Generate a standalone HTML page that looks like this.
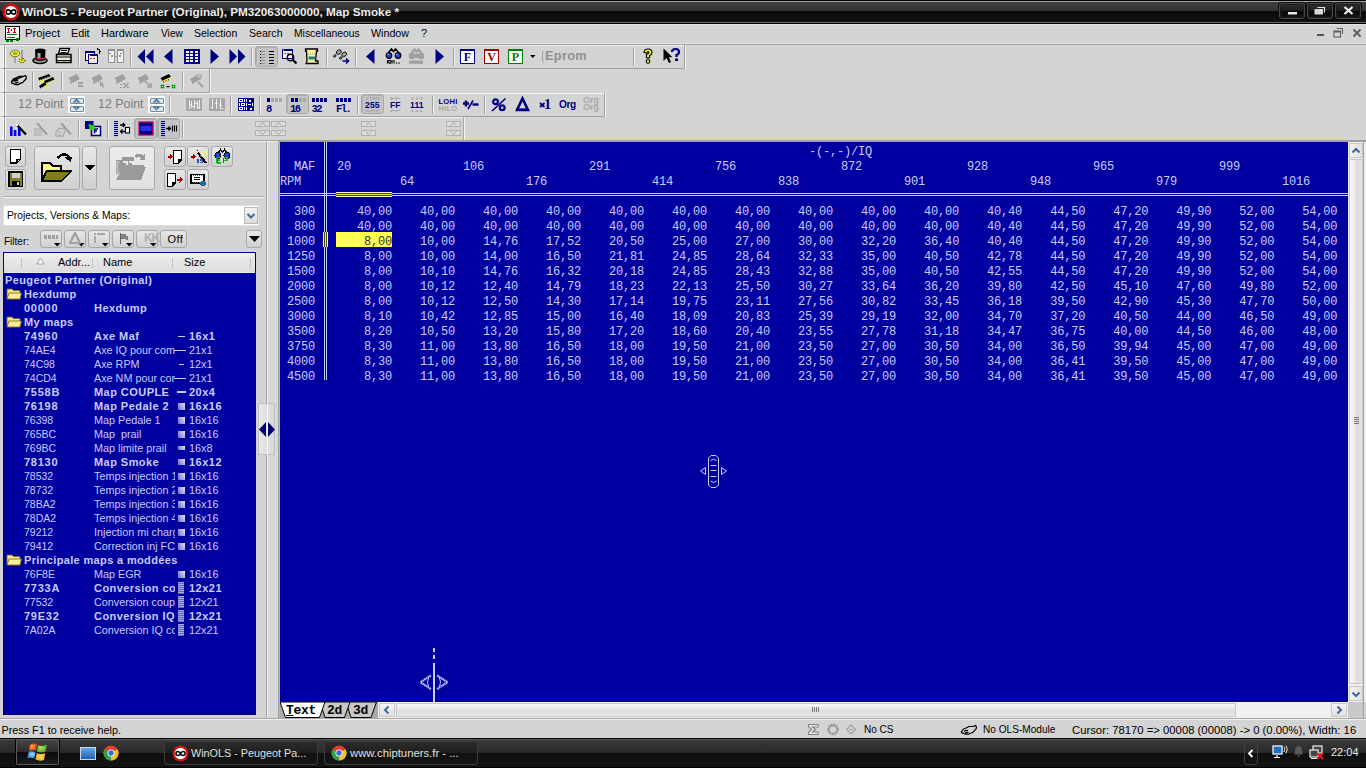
<!DOCTYPE html>
<html><head><meta charset="utf-8"><title>WinOLS</title>
<style>
html,body{margin:0;padding:0;width:1366px;height:768px;overflow:hidden;background:#d4d4d4}
body{position:relative;font-family:"Liberation Sans",sans-serif}
body div, body svg{position:absolute}
body div span, body div u{position:static}
</style></head><body>
<div style="left:0;top:0;width:1366px;height:24px;background:linear-gradient(#000 0,#000 1px,#a0a0a0 1px,#a0a0a0 2px,#404040 2px,#333 11px,#0b0b0b 11px,#121212 22px,#6e6e6e 22px,#6e6e6e 23px,#000 23px)"></div>
<svg style="left:2px;top:3px;shape-rendering:auto" width="18" height="18" viewBox="0 0 18 18" shape-rendering="crispEdges"><circle cx="9" cy="9" r="8.5" fill="#d01010"/><circle cx="9" cy="9" r="6" fill="#fff"/><path d="M9 9 C8 6.2 4.2 6.2 4.2 9 C4.2 11.8 8 11.8 9 9 C10 6.2 13.8 6.2 13.8 9 C13.8 11.8 10 11.8 9 9 Z" fill="none" stroke="#000" stroke-width="1.6"/></svg>
<div style="left:22px;top:5px;font-size:11.72px;font-weight:bold;color:#ececec;line-height:14px;letter-spacing:0px">WinOLS - Peugeot Partner (Original), PM32063000000, Map Smoke *</div>
<div style="left:1279px;top:3px;width:26px;height:16px;border:1px solid #4a4a4a;border-radius:3px;box-sizing:border-box;background:linear-gradient(#303030,#1c1c1c 50%,#080808 51%,#141414);box-shadow:inset 0 0 0 1px #1a1a1a, 0 0 0 1px #0a0a0a"></div>
<div style="left:1307px;top:3px;width:26px;height:16px;border:1px solid #4a4a4a;border-radius:3px;box-sizing:border-box;background:linear-gradient(#303030,#1c1c1c 50%,#080808 51%,#141414);box-shadow:inset 0 0 0 1px #1a1a1a, 0 0 0 1px #0a0a0a"></div>
<div style="left:1335px;top:3px;width:26px;height:16px;border:1px solid #4a4a4a;border-radius:3px;box-sizing:border-box;background:linear-gradient(#303030,#1c1c1c 50%,#080808 51%,#141414);box-shadow:inset 0 0 0 1px #1a1a1a, 0 0 0 1px #0a0a0a"></div>
<svg style="left:1288px;top:12px;shape-rendering:auto" width="9" height="3" viewBox="0 0 9 3" shape-rendering="crispEdges"><rect x="0" y="0" width="9" height="2.5" fill="#e8e8e8"/></svg>
<svg style="left:1314px;top:6px;shape-rendering:auto" width="12" height="9" viewBox="0 0 12 9" shape-rendering="crispEdges"><path d="M3.5 1.5 H10.5 V6.5" fill="none" stroke="#e0e0e0" stroke-width="1.2"/><rect x="0.5" y="3" width="8.5" height="5.5" fill="#d8d8d8"/></svg>
<svg style="left:1343px;top:6px;shape-rendering:auto" width="11" height="9" viewBox="0 0 11 9" shape-rendering="crispEdges"><path d="M1.5 1 L9.5 8 M9.5 1 L1.5 8" stroke="#f0f0f0" stroke-width="2.2"/></svg>
<div style="left:0px;top:24px;width:1366px;height:20px;background:#d4d4d4;border-top:1px solid #e4e4e4;box-sizing:border-box"></div>
<svg style="left:4px;top:25px;" width="17" height="17" viewBox="0 0 17 17" shape-rendering="crispEdges"><rect x="1" y="1" width="14" height="13" fill="#fff" stroke="#000"/><path d="M3 3h3M4 3v4M3 7h3M9 3h3M10 3v4M9 7h3" stroke="#c00000"/><rect x="7" y="4" width="1" height="2" fill="#c00000"/><path d="M3 9h10M3 12h8" stroke="#007000"/><rect x="2" y="15" width="3" height="2" fill="#008000"/><rect x="6" y="15" width="3" height="2" fill="#008000"/><rect x="12" y="13" width="3" height="3" fill="#008000"/></svg>
<div style="left:24.9px;top:27px;font-size:11.5px;color:#000;line-height:12px;transform:scaleX(0.98);transform-origin:0 0">Project</div>
<div style="left:71.2px;top:27px;font-size:11.5px;color:#000;line-height:12px;transform:scaleX(0.94);transform-origin:0 0">Edit</div>
<div style="left:101.0px;top:27px;font-size:11.5px;color:#000;line-height:12px;transform:scaleX(0.955);transform-origin:0 0">Hardware</div>
<div style="left:160.5px;top:27px;font-size:11.5px;color:#000;line-height:12px;transform:scaleX(0.886);transform-origin:0 0">View</div>
<div style="left:194.3px;top:27px;font-size:11.5px;color:#000;line-height:12px;transform:scaleX(0.914);transform-origin:0 0">Selection</div>
<div style="left:249.0px;top:27px;font-size:11.5px;color:#000;line-height:12px;transform:scaleX(0.92);transform-origin:0 0">Search</div>
<div style="left:293.7px;top:27px;font-size:11.5px;color:#000;line-height:12px;transform:scaleX(0.9);transform-origin:0 0">Miscellaneous</div>
<div style="left:371.4px;top:27px;font-size:11.5px;color:#000;line-height:12px;transform:scaleX(0.93);transform-origin:0 0">Window</div>
<div style="left:420.7px;top:27px;font-size:11.5px;color:#000;line-height:12px;transform:scaleX(0.95);transform-origin:0 0">?</div>
<svg style="left:1316px;top:30px;" width="10" height="8" viewBox="0 0 10 8" shape-rendering="crispEdges"><rect x="1" y="4" width="7" height="2" fill="#555"/></svg>
<svg style="left:1333px;top:28px;shape-rendering:auto" width="11" height="10" viewBox="0 0 11 10" shape-rendering="crispEdges"><path d="M3.5 0.5 H9.5 V6" fill="none" stroke="#606060" stroke-width="1.1"/><rect x="1" y="3" width="6.5" height="6" fill="none" stroke="#606060" stroke-width="1.1"/><rect x="1" y="3" width="6.5" height="1.5" fill="#606060"/></svg>
<svg style="left:1352px;top:28px;shape-rendering:auto" width="10" height="10" viewBox="0 0 10 10" shape-rendering="crispEdges"><path d="M1.5 1.5 L8.5 8.5 M8.5 1.5 L1.5 8.5" stroke="#606060" stroke-width="2"/></svg>
<div style="left:0;top:43px;width:1366px;height:97px;background:#d4d4d4"></div>
<div style="left:0px;top:43px;width:1366px;height:1px;background:#e6e6e6"></div>
<div style="left:0px;top:44px;width:1366px;height:1px;background:#a0a0a0"></div>
<div style="left:2px;top:45px;width:682px;height:1px;background:#f4f4f4"></div>
<div style="left:2px;top:68px;width:683px;height:1px;background:#a0a0a0"></div>
<div style="left:684px;top:45px;width:1px;height:23px;background:#a0a0a0"></div>
<div style="left:685px;top:45px;width:1px;height:24px;background:#f4f4f4"></div>
<div style="left:0px;top:45px;width:3px;height:23px;background:#ececec"></div>
<div style="left:3px;top:45px;width:1px;height:23px;background:#ffffff"></div>
<div style="left:4px;top:45px;width:1px;height:23px;background:#909090"></div>
<div style="left:5px;top:45px;width:1px;height:23px;background:#ffffff"></div>
<div style="left:2px;top:69px;width:207px;height:1px;background:#f4f4f4"></div>
<div style="left:2px;top:92px;width:208px;height:1px;background:#a0a0a0"></div>
<div style="left:209px;top:69px;width:1px;height:23px;background:#a0a0a0"></div>
<div style="left:210px;top:69px;width:1px;height:24px;background:#f4f4f4"></div>
<div style="left:0px;top:69px;width:3px;height:23px;background:#ececec"></div>
<div style="left:3px;top:69px;width:1px;height:23px;background:#ffffff"></div>
<div style="left:4px;top:69px;width:1px;height:23px;background:#909090"></div>
<div style="left:5px;top:69px;width:1px;height:23px;background:#ffffff"></div>
<div style="left:2px;top:93px;width:602px;height:1px;background:#f4f4f4"></div>
<div style="left:2px;top:116px;width:603px;height:1px;background:#a0a0a0"></div>
<div style="left:604px;top:93px;width:1px;height:23px;background:#a0a0a0"></div>
<div style="left:605px;top:93px;width:1px;height:24px;background:#f4f4f4"></div>
<div style="left:0px;top:93px;width:3px;height:23px;background:#ececec"></div>
<div style="left:3px;top:93px;width:1px;height:23px;background:#ffffff"></div>
<div style="left:4px;top:93px;width:1px;height:23px;background:#909090"></div>
<div style="left:5px;top:93px;width:1px;height:23px;background:#ffffff"></div>
<div style="left:2px;top:117px;width:461px;height:1px;background:#f4f4f4"></div>
<div style="left:2px;top:140px;width:462px;height:1px;background:#a0a0a0"></div>
<div style="left:463px;top:117px;width:1px;height:23px;background:#a0a0a0"></div>
<div style="left:464px;top:117px;width:1px;height:24px;background:#f4f4f4"></div>
<div style="left:0px;top:117px;width:3px;height:23px;background:#ececec"></div>
<div style="left:3px;top:117px;width:1px;height:23px;background:#ffffff"></div>
<div style="left:4px;top:117px;width:1px;height:23px;background:#909090"></div>
<div style="left:5px;top:117px;width:1px;height:23px;background:#ffffff"></div>
<svg style="left:8px;top:46px" width="20" height="20" viewBox="0 0 20 20" shape-rendering="auto"><rect x="6" y="3" width="2" height="14" fill="#a8a8a8"/><rect x="13" y="4" width="2" height="13" fill="#a0a0a0"/><ellipse cx="7" cy="7.5" rx="4.6" ry="3.2" fill="#f0f020" stroke="#000" stroke-width="1" stroke-dasharray="1 1.2"/><ellipse cx="7" cy="7.5" rx="2.6" ry="1.3" fill="#a0a000"/><rect x="6" y="3" width="2" height="4" fill="#b0b0a0"/><ellipse cx="14" cy="14.5" rx="3" ry="2.2" fill="#f0f020" stroke="#000" stroke-width="1" stroke-dasharray="1 1.2"/><rect x="13" y="12" width="2" height="3" fill="#a0a000"/></svg>
<svg style="left:32px;top:47px" width="18" height="18" viewBox="0 0 18 18" shape-rendering="auto"><ellipse cx="8" cy="13.5" rx="7" ry="3" fill="#a0a0a0" stroke="#000" stroke-width="1.6"/><path d="M3 2.5 Q8 0.5 13.5 2.5 L13 13 Q8 15 3.5 13 Z" fill="#000"/><rect x="5.5" y="6" width="3" height="6" fill="#a8a8a8"/><path d="M4 11 Q8 13 13 11" stroke="#d02040" stroke-width="1.5" fill="none"/></svg>
<svg style="left:55px;top:47px" width="18" height="18" viewBox="0 0 18 18" shape-rendering="auto"><path d="M5 1.5 H14.5 L12.5 7 H3.5 Z" fill="#fff" stroke="#000" stroke-width="1.4"/><path d="M6 3.5 H12 M5.5 5.5 H11.5" stroke="#000"/><path d="M1.5 7.5 H16 V15.5 H1.5 Z" fill="#e8e8e8" stroke="#000" stroke-width="1.5"/><rect x="2.5" y="11" width="12" height="1.5" fill="#e0f0c0"/><path d="M1.5 10 H16 M1.5 13.5 H16" stroke="#000" stroke-width="1.2"/></svg>
<svg style="left:82px;top:46px" width="20" height="20" viewBox="0 0 20 20" shape-rendering="crispEdges"><rect x="3.5" y="5.5" width="9" height="9" fill="#f0f0ff" stroke="#000080"/><rect x="3" y="5" width="10" height="2" fill="#000080"/><rect x="6.5" y="8.5" width="9" height="9" fill="#ffe8f0" stroke="#000080"/><rect x="6" y="8" width="10" height="2" fill="#000080"/><rect x="7" y="9" width="1" height="1" fill="#fff"/><rect x="8" y="12" width="2" height="1" fill="#a03030"/><rect x="11" y="12" width="2" height="1" fill="#a03030"/><rect x="7" y="15" width="8" height="2" fill="#e8f0ff"/><path d="M15 3.5 Q18.5 3.5 18 6 Q17.5 7.5 16.5 7.5" stroke="#000" stroke-width="1.3" fill="none"/><path d="M14 3 L16.5 2 L16 5 Z" fill="#000"/></svg>
<svg style="left:106px;top:46px" width="20" height="20" viewBox="0 0 20 20" shape-rendering="crispEdges"><rect x="2.5" y="3.5" width="6" height="13" fill="#f0f0f0" stroke="#909090"/><rect x="2" y="3" width="7" height="2" fill="#909090"/><rect x="11.5" y="3.5" width="6" height="13" fill="#f0f0f0" stroke="#909090"/><rect x="11" y="3" width="7" height="2" fill="#909090"/><rect x="3" y="7" width="2" height="1" fill="#808080"/><rect x="5" y="9" width="2" height="2" fill="#909090"/><rect x="14" y="7" width="2" height="1" fill="#808080"/><rect x="13" y="9" width="2" height="2" fill="#909090"/><rect x="9" y="10" width="2" height="1" fill="#a0a0a0"/></svg>
<svg style="left:137px;top:48px" width="17" height="17" viewBox="0 0 17 17" shape-rendering="auto"><path d="M8 1 L0.5 8.5 L8 16 Z M16.5 1 L9 8.5 L16.5 16 Z" fill="#000080"/></svg>
<svg style="left:163px;top:48px" width="10" height="17" viewBox="0 0 10 17" shape-rendering="auto"><path d="M9.5 1 L1 8.5 L9.5 16 Z" fill="#000080"/></svg>
<svg style="left:184px;top:48px" width="16" height="16" viewBox="0 0 16 16" shape-rendering="crispEdges"><rect x="0" y="1" width="16" height="15" fill="#000080"/><rect x="2" y="3" width="3" height="2" fill="#fff"/><rect x="2" y="6" width="3" height="2" fill="#fff"/><rect x="2" y="9" width="3" height="2" fill="#fff"/><rect x="2" y="12" width="3" height="2" fill="#fff"/><rect x="6" y="3" width="3" height="2" fill="#fff"/><rect x="6" y="6" width="3" height="2" fill="#fff"/><rect x="6" y="9" width="3" height="2" fill="#fff"/><rect x="6" y="12" width="3" height="2" fill="#fff"/><rect x="11" y="3" width="3" height="2" fill="#fff"/><rect x="11" y="6" width="3" height="2" fill="#fff"/><rect x="11" y="9" width="3" height="2" fill="#fff"/><rect x="11" y="12" width="3" height="2" fill="#fff"/></svg>
<svg style="left:210px;top:48px" width="10" height="17" viewBox="0 0 10 17" shape-rendering="auto"><path d="M0.5 1 L9 8.5 L0.5 16 Z" fill="#000080"/></svg>
<svg style="left:229px;top:48px" width="17" height="17" viewBox="0 0 17 17" shape-rendering="auto"><path d="M0.5 1 L8 8.5 L0.5 16 Z M9 1 L16.5 8.5 L9 16 Z" fill="#000080"/></svg>
<div style="left:255px;top:46px;width:23px;height:21px;background:#c4c4c4;border:1px solid #a8a8a8;border-radius:3px;box-sizing:border-box;box-shadow:inset 1px 1px 0 #b0b0b0"></div>
<svg style="left:255px;top:46px" width="23" height="21" viewBox="0 0 23 21" shape-rendering="crispEdges"><rect x="5" y="5" width="1" height="1" fill="#000"/><rect x="7" y="5" width="3" height="1" fill="#909090"/><rect x="14" y="5" width="5" height="1.3" fill="#000"/><rect x="5" y="8" width="1" height="1" fill="#000"/><rect x="7" y="8" width="3" height="1" fill="#909090"/><rect x="14" y="8" width="5" height="1.3" fill="#000"/><rect x="5" y="11" width="1" height="1" fill="#000"/><rect x="7" y="11" width="3" height="1" fill="#909090"/><rect x="14" y="11" width="5" height="1.3" fill="#000"/><rect x="5" y="14" width="1" height="1" fill="#000"/><rect x="7" y="14" width="3" height="1" fill="#909090"/><rect x="14" y="14" width="5" height="1.3" fill="#000"/><rect x="5" y="17" width="1" height="1" fill="#000"/><rect x="7" y="17" width="3" height="1" fill="#909090"/><rect x="14" y="17" width="5" height="1.3" fill="#000"/><rect x="5.5" y="5" width="1" height="13" fill="#a0a0a0" opacity="0.6"/></svg>
<svg style="left:281px;top:47px" width="18" height="18" viewBox="0 0 18 18" shape-rendering="auto"><rect x="1.5" y="2.5" width="10" height="9" fill="#f8f8ff" stroke="#000080"/><rect x="1" y="2" width="11" height="2" fill="#000080"/><rect x="2" y="2.5" width="1" height="1" fill="#fff"/><rect x="3" y="6" width="2" height="1" fill="#c03030"/><rect x="6" y="6" width="2" height="1" fill="#c03030"/><circle cx="9.5" cy="10.5" r="3.2" fill="none" stroke="#000" stroke-width="1.4"/><path d="M12 13 L15.5 16.5" stroke="#000" stroke-width="2.2"/></svg>
<svg style="left:303px;top:47px" width="17" height="18" viewBox="0 0 17 18" shape-rendering="auto"><path d="M2.5 2 H14.5 V4 H13.5 L12.5 14 H15 V16.5 H3 L4 14 L3.5 4 H2.5 Z" fill="#f8f0a0" stroke="#000" stroke-width="1.3"/><rect x="5.5" y="9.5" width="7" height="3" fill="#208080"/><path d="M5 7 H12" stroke="#a0a060" stroke-dasharray="1 1"/></svg>
<svg style="left:332px;top:47px" width="18" height="18" viewBox="0 0 18 18" shape-rendering="auto"><ellipse cx="6.8" cy="5" rx="2.6" ry="2" transform="rotate(-35 6.8 5)" fill="#a8a8a8" stroke="#000" stroke-width="0.9"/><ellipse cx="12.2" cy="7.3" rx="2.6" ry="2" transform="rotate(-35 12.2 7.3)" fill="#a8a8a8" stroke="#000" stroke-width="0.9"/><ellipse cx="2.8" cy="9" rx="1.4" ry="1" transform="rotate(-35 2.8 9)" fill="#a8a8a8" stroke="#000" stroke-width="0.9"/><ellipse cx="8.8" cy="11" rx="1.4" ry="1" transform="rotate(-35 8.8 11)" fill="#a8a8a8" stroke="#000" stroke-width="0.9"/><path d="M10.5 14 H16.5 M14 11.5 L16.5 14 L14 16.5" stroke="#000080" stroke-width="1.6" fill="none"/></svg>
<svg style="left:365px;top:48px" width="10" height="17" viewBox="0 0 10 17" shape-rendering="auto"><path d="M9.5 1 L1 8.5 L9.5 16 Z" fill="#000080"/></svg>
<svg style="left:385px;top:47px" width="17" height="18" viewBox="0 0 17 18" shape-rendering="auto"><path d="M3 6 L6.5 2 L8.5 4.5 L10.5 2 L14 6" fill="none" stroke="#000" stroke-width="1.6"/><circle cx="4" cy="8.5" r="2.8" fill="#2040e0" stroke="#000" stroke-width="1.2"/><circle cx="13" cy="8.5" r="2.8" fill="#2040e0" stroke="#000" stroke-width="1.2"/><circle cx="3" cy="7.5" r="0.8" fill="#80c0ff"/><circle cx="12" cy="7.5" r="0.8" fill="#80c0ff"/><path d="M2.5 13 V16.5 M7 13 V16.5 M9 13 V16.5" stroke="#000" stroke-width="1.1"/><ellipse cx="4.8" cy="14.8" rx="1.2" ry="1.6" fill="none" stroke="#000" stroke-width="1.1"/><rect x="11" y="15.5" width="1.2" height="1.2" fill="#000"/><rect x="13.5" y="15.5" width="1.2" height="1.2" fill="#000"/></svg>
<svg style="left:408px;top:47px" width="17" height="18" viewBox="0 0 17 18" shape-rendering="auto"><path d="M3 7 L6.5 2.5 L8.5 5 L10.5 2.5 L14 7" fill="none" stroke="#a0a0a0" stroke-width="2.2"/><circle cx="4" cy="9" r="3.3" fill="#a0a0a0"/><circle cx="13" cy="9" r="3.3" fill="#a0a0a0"/><rect x="7" y="7" width="3" height="4" fill="#a0a0a0"/><rect x="1" y="13.5" width="14" height="3.3" fill="#a0a0a0"/></svg>
<svg style="left:435px;top:48px" width="10" height="17" viewBox="0 0 10 17" shape-rendering="auto"><path d="M0.5 1 L9 8.5 L0.5 16 Z" fill="#000080"/></svg>
<svg style="left:460px;top:49px" width="15" height="15" viewBox="0 0 15 15" shape-rendering="crispEdges"><rect x="0.5" y="0.5" width="14" height="13.5" fill="#fff" stroke="#000080"/><rect x="0" y="0" width="15" height="2" fill="#000080"/></svg>
<div style="left:460px;top:51px;width:15px;text-align:center;font-family:'Liberation Serif',serif;font-weight:bold;font-size:12px;line-height:12px;color:#000080">F</div>
<svg style="left:484px;top:49px" width="15" height="15" viewBox="0 0 15 15" shape-rendering="crispEdges"><rect x="0.5" y="0.5" width="14" height="13.5" fill="#fff" stroke="#a00000"/><rect x="0" y="0" width="15" height="2" fill="#a00000"/></svg>
<div style="left:484px;top:51px;width:15px;text-align:center;font-family:'Liberation Serif',serif;font-weight:bold;font-size:12px;line-height:12px;color:#a00000">V</div>
<svg style="left:508px;top:49px" width="15" height="15" viewBox="0 0 15 15" shape-rendering="crispEdges"><rect x="0.5" y="0.5" width="14" height="13.5" fill="#fff" stroke="#008000"/><rect x="0" y="0" width="15" height="2" fill="#008000"/></svg>
<div style="left:508px;top:51px;width:15px;text-align:center;font-family:'Liberation Serif',serif;font-weight:bold;font-size:12px;line-height:12px;color:#008000">P</div>
<svg style="left:530px;top:55px" width="6" height="4" viewBox="0 0 6 4" shape-rendering="auto"><path d="M0 0 H5.5 L2.75 3 Z" fill="#000"/></svg>
<div style="left:545px;top:49px;font-size:12.8px;font-weight:bold;line-height:14px;color:#909090;letter-spacing:0.3px">Eprom</div>
<svg style="left:541px;top:50px" width="4" height="14" viewBox="0 0 4 14" shape-rendering="crispEdges"><path d="M3 1 L1.5 2.5 V11.5 L3 13" stroke="#a0a0a0" fill="none"/></svg>
<svg style="left:641px;top:47px" width="14" height="18" viewBox="0 0 14 18" shape-rendering="auto"><path d="M3 5.5 Q3 2 7 2 Q11 2 11 5.5 Q11 7.5 8.5 8.5 V11 H5.5 V7.5 Q8 7 8 5.5 Q8 4.5 7 4.5 Q6 4.5 6 6 Z" fill="#f8f040" stroke="#000" stroke-width="1.1"/><circle cx="7" cy="14.5" r="1.8" fill="#f8f040" stroke="#000" stroke-width="1.1"/></svg>
<svg style="left:662px;top:47px" width="19" height="18" viewBox="0 0 19 18" shape-rendering="auto"><path d="M1.5 1.5 V14 L4.5 11 L7 16 L9 15 L6.8 10.2 H10.5 Z" fill="#000"/><path d="M10 5 Q10 2 13.5 2 Q17 2 17 5 Q17 7 14.5 8 V10" fill="none" stroke="#000080" stroke-width="2.2"/><rect x="13" y="11.5" width="3" height="2.5" fill="#000080"/></svg>
<svg style="left:10px;top:74px" width="18" height="12" viewBox="0 0 18 12" shape-rendering="auto"><path d="M1.5 7.5 Q3 4.5 6 4 L9 2.5 H13 L15.5 1.5 M15.5 1.5 Q17 3 16 5 L14 7 Q13 9 11 9 L8.5 10.5 H6 Q4 10.5 3.5 9.5 Q1 9.5 1.5 7.5 Z M4 7.5 Q6 6 8 6.5 M5 9 Q7 8 8.5 8.5" fill="none" stroke="#000" stroke-width="1.3"/></svg>
<svg style="left:38px;top:72px" width="18" height="18" viewBox="0 0 18 18" shape-rendering="auto"><path d="M0 6 L11 2 L12.5 4.5 L1.5 8.5 Z" fill="#000"/><rect x="2.0" y="7.5" width="1" height="2" fill="#e8e830"/><rect x="4.5" y="6.6" width="1" height="2" fill="#e8e830"/><rect x="7.0" y="5.7" width="1" height="2" fill="#e8e830"/><rect x="9.5" y="4.8" width="1" height="2" fill="#e8e830"/><path d="M6 9 L15 5 L16.5 7.5 L7.5 11.5 Z" fill="#000"/><rect x="8.0" y="10.5" width="1" height="2" fill="#e8e830"/><rect x="10.5" y="9.6" width="1" height="2" fill="#e8e830"/><rect x="13.0" y="8.7" width="1" height="2" fill="#e8e830"/><rect x="15.5" y="7.8" width="1" height="2" fill="#e8e830"/><path d="M1 14 L7 10 L8.5 12.5 L2.5 16.5 Z" fill="#000"/><rect x="3.0" y="15.5" width="1" height="2" fill="#e8e830"/><rect x="5.5" y="14.6" width="1" height="2" fill="#e8e830"/><rect x="8.0" y="13.7" width="1" height="2" fill="#e8e830"/><rect x="10.5" y="12.8" width="1" height="2" fill="#e8e830"/><rect x="3" y="8" width="3" height="3" fill="#e8e830" opacity="0.8"/></svg>
<svg style="left:68px;top:73px" width="17" height="15" viewBox="0 0 17 15" shape-rendering="auto"><path d="M0.5 5 L9 1 L12 6 L3.5 10 Z" fill="#a0a0a0"/><rect x="2" y="9" width="1.2" height="2" fill="#a0a0a0"/><rect x="4.5" y="8" width="1.2" height="2" fill="#a0a0a0"/><rect x="7" y="7" width="1.2" height="2" fill="#a0a0a0"/><rect x="10" y="9" width="5" height="2" fill="#a0a0a0"/><rect x="10" y="12" width="5" height="2" fill="#a0a0a0"/></svg>
<svg style="left:91px;top:73px" width="17" height="15" viewBox="0 0 17 15" shape-rendering="auto"><path d="M0.5 5 L9 1 L12 6 L3.5 10 Z" fill="#a0a0a0"/><rect x="2" y="9" width="1.2" height="2" fill="#a0a0a0"/><rect x="4.5" y="8" width="1.2" height="2" fill="#a0a0a0"/><rect x="7" y="7" width="1.2" height="2" fill="#a0a0a0"/><path d="M9 8 V14 L10.5 12.5 L12.5 15 L13.5 14 L11.5 11.5 H13.5 Z" fill="#a0a0a0"/></svg>
<svg style="left:114px;top:73px" width="17" height="16" viewBox="0 0 17 16" shape-rendering="auto"><path d="M0.5 5 L9 1 L12 6 L3.5 10 Z" fill="#a0a0a0"/><rect x="2" y="9" width="1.2" height="2" fill="#a0a0a0"/><rect x="4.5" y="8" width="1.2" height="2" fill="#a0a0a0"/><rect x="7" y="7" width="1.2" height="2" fill="#a0a0a0"/><path d="M9.5 10 L14.5 15 M14.5 10 L9.5 15" stroke="#a0a0a0" stroke-width="1.6"/><rect x="6" y="11" width="2" height="1" fill="#a0a0a0"/><rect x="6" y="14" width="2" height="1" fill="#a0a0a0"/></svg>
<svg style="left:137px;top:73px" width="17" height="15" viewBox="0 0 17 15" shape-rendering="auto"><path d="M0.5 5 L9 1 L12 6 L3.5 10 Z" fill="#a0a0a0"/><rect x="2" y="9" width="1.2" height="2" fill="#a0a0a0"/><rect x="4.5" y="8" width="1.2" height="2" fill="#a0a0a0"/><rect x="7" y="7" width="1.2" height="2" fill="#a0a0a0"/><path d="M8 8 L14 14 M14 10 V14 H10" stroke="#a0a0a0" stroke-width="1.7" fill="none"/></svg>
<svg style="left:160px;top:73px" width="18" height="17" viewBox="0 0 18 17" shape-rendering="auto"><path d="M0.5 5 L9 1 L11 4 L2.5 8 Z" fill="#000"/><path d="M2 8 L10.5 4 L11 6.5 L3 9.5 Z" fill="#e8e060"/><rect x="3" y="8" width="1" height="1.5" fill="#606000"/><rect x="5.5" y="7" width="1" height="1.5" fill="#606000"/><rect x="8" y="6" width="1" height="1.5" fill="#606000"/><path d="M1.5 11.5 V15.5 M3.5 11.5 V15.5 M0.5 12.5 H4.5 M0.5 14.5 H4.5 M12.5 11.5 V15.5 M14.5 11.5 V15.5 M11.5 12.5 H15.5 M11.5 14.5 H15.5" stroke="#10a010" stroke-width="1.1"/><rect x="6.5" y="13" width="3" height="1.2" fill="#000"/></svg>
<svg style="left:189px;top:73px" width="17" height="15" viewBox="0 0 17 15" shape-rendering="auto"><path d="M1 6 L9 1.5 L12 6 L4 10.5 Z" fill="#a0a0a0"/><rect x="8" y="2" width="4" height="3" fill="#c8c8c8" stroke="#a0a0a0"/><path d="M9 9 L14 14" stroke="#a0a0a0" stroke-width="2"/><rect x="3" y="9" width="1.2" height="2" fill="#a0a0a0"/></svg>
<div style="left:18px;top:97px;font-size:12.4px;line-height:14px;color:#7c7c7c;letter-spacing:0px">12 Point</div>
<div style="left:98px;top:97px;font-size:12.4px;line-height:14px;color:#7c7c7c;letter-spacing:0px">12 Point</div>
<div style="left:68px;top:96px;width:17px;height:17px;background:#fff"></div>
<div style="left:69.5px;top:97.5px;width:14px;height:6px;border:1px solid #808890;border-radius:1px;box-sizing:border-box;background:#d8e8f4"></div>
<div style="left:69.5px;top:106px;width:14px;height:6px;border:1px solid #808890;border-radius:1px;box-sizing:border-box;background:#d8e8f4"></div>
<svg style="left:72px;top:98px" width="9" height="5" viewBox="0 0 9 5" shape-rendering="auto"><path d="M0.5 4.5 L4.5 0.5 L8.5 4.5 Z" fill="#4a7090"/><rect x="4" y="3" width="1" height="1" fill="#fff"/></svg>
<svg style="left:72px;top:106px" width="9" height="5" viewBox="0 0 9 5" shape-rendering="auto"><path d="M0.5 0.5 L4.5 4.5 L8.5 0.5 Z" fill="#4a7090"/><rect x="4" y="1.5" width="1" height="1" fill="#fff"/></svg>
<div style="left:148px;top:96px;width:17px;height:17px;background:#fff"></div>
<div style="left:149.5px;top:97.5px;width:14px;height:6px;border:1px solid #808890;border-radius:1px;box-sizing:border-box;background:#d8e8f4"></div>
<div style="left:149.5px;top:106px;width:14px;height:6px;border:1px solid #808890;border-radius:1px;box-sizing:border-box;background:#d8e8f4"></div>
<svg style="left:152px;top:98px" width="9" height="5" viewBox="0 0 9 5" shape-rendering="auto"><path d="M0.5 4.5 L4.5 0.5 L8.5 4.5 Z" fill="#4a7090"/><rect x="4" y="3" width="1" height="1" fill="#fff"/></svg>
<svg style="left:152px;top:106px" width="9" height="5" viewBox="0 0 9 5" shape-rendering="auto"><path d="M0.5 0.5 L4.5 4.5 L8.5 0.5 Z" fill="#4a7090"/><rect x="4" y="1.5" width="1" height="1" fill="#fff"/></svg>
<svg style="left:186px;top:98px" width="16" height="14" viewBox="0 0 16 14" shape-rendering="crispEdges"><rect x="0" y="0" width="16" height="13" fill="#a8a8a8"/><path d="M3 2v9M5 3v7M8 2v9M11 3v8M13 2v9M3 6h2M8 5h3M5 8h3M11 9h2" stroke="#f0f0f0" stroke-width="1"/></svg>
<svg style="left:209px;top:98px" width="16" height="14" viewBox="0 0 16 14" shape-rendering="crispEdges"><rect x="0" y="0" width="16" height="13" fill="#a8a8a8"/><path d="M3.5 1v10M7.5 1v10M11.5 1v10M2 9h2M6 5h3M10 7h3M12 10h2" stroke="#f0f0f0" stroke-width="1"/></svg>
<svg style="left:238px;top:98px" width="16" height="14" viewBox="0 0 16 14" shape-rendering="crispEdges"><rect x="0" y="0" width="16" height="13" fill="#000080"/><rect x="1.5" y="1.5" width="3" height="2" fill="none" stroke="#fff" stroke-width="1"/><rect x="6" y="1" width="1" height="3" fill="#fff"/><rect x="8" y="1" width="1" height="3" fill="#fff"/><rect x="11" y="1.5" width="2" height="2" fill="#fff"/><rect x="1" y="5" width="1" height="3" fill="#fff"/><rect x="3.5" y="5.5" width="3" height="2" fill="none" stroke="#fff" stroke-width="1"/><rect x="8" y="5" width="1" height="3" fill="#fff"/><rect x="10" y="6" width="3" height="1" fill="#fff"/><rect x="14" y="5" width="1" height="3" fill="#fff"/><rect x="1.5" y="9.5" width="3" height="2" fill="none" stroke="#fff" stroke-width="1"/><rect x="6" y="9" width="1" height="3" fill="#fff"/><rect x="8" y="9" width="1" height="3" fill="#fff"/><rect x="12" y="9.5" width="2" height="2" fill="#fff"/></svg>
<svg style="left:267px;top:98px" width="16" height="5" viewBox="0 0 16 5" shape-rendering="crispEdges"><rect x="0" y="0" width="3" height="4" fill="#000080"/><rect x="4" y="0" width="3" height="4" fill="#a8a8a8"/><rect x="8" y="0" width="3" height="4" fill="#a8a8a8"/><rect x="12" y="0" width="3" height="4" fill="#a8a8a8"/></svg>
<div style="left:266px;top:103.5px;font-family:'Liberation Mono',monospace;font-weight:bold;font-size:10.5px;line-height:10px;color:#000080;letter-spacing:-1.6px">8</div>
<div style="left:286px;top:94px;width:23px;height:20px;background:#c4c4c4;border:1px solid #a8a8a8;border-radius:3px;box-sizing:border-box;box-shadow:inset 1px 1px 0 #b0b0b0"></div>
<svg style="left:291px;top:98px" width="16" height="5" viewBox="0 0 16 5" shape-rendering="crispEdges"><rect x="0" y="0" width="3" height="4" fill="#000080"/><rect x="4" y="0" width="3" height="4" fill="#000080"/><rect x="8" y="0" width="3" height="4" fill="#a8a8a8"/><rect x="12" y="0" width="3" height="4" fill="#a8a8a8"/></svg>
<div style="left:290px;top:103.5px;font-family:'Liberation Mono',monospace;font-weight:bold;font-size:10.5px;line-height:10px;color:#000080;letter-spacing:-1.6px">16</div>
<svg style="left:312px;top:98px" width="16" height="5" viewBox="0 0 16 5" shape-rendering="crispEdges"><rect x="0" y="0" width="3" height="4" fill="#000080"/><rect x="4" y="0" width="3" height="4" fill="#000080"/><rect x="8" y="0" width="3" height="4" fill="#000080"/><rect x="12" y="0" width="3" height="4" fill="#000080"/></svg>
<div style="left:311.5px;top:103.5px;font-family:'Liberation Mono',monospace;font-weight:bold;font-size:10.5px;line-height:10px;color:#000080;letter-spacing:-1.6px">32</div>
<svg style="left:336px;top:98px" width="16" height="5" viewBox="0 0 16 5" shape-rendering="crispEdges"><rect x="0" y="0" width="3" height="4" fill="#000080"/><rect x="4" y="0" width="3" height="4" fill="#000080"/><rect x="8" y="0" width="3" height="4" fill="#000080"/><rect x="12" y="0" width="3" height="4" fill="#000080"/></svg>
<div style="left:336px;top:103.5px;font-family:'Liberation Mono',monospace;font-weight:bold;font-size:10.5px;line-height:10px;color:#000080;letter-spacing:-1.6px">Fl.</div>
<div style="left:361px;top:94px;width:23px;height:20px;background:#c4c4c4;border:1px solid #a8a8a8;border-radius:3px;box-sizing:border-box;box-shadow:inset 1px 1px 0 #b0b0b0"></div>
<div style="left:365px;top:100px;font-family:'Liberation Sans',sans-serif;font-weight:bold;font-size:8.6px;line-height:10px;letter-spacing:0.1px;color:#000080">255</div>
<div style="left:365px;top:96.5px;height:3px;width:16px;overflow:hidden"><div style="position:relative;top:-4px;font-family:'Liberation Sans',sans-serif;font-weight:bold;font-size:8.6px;line-height:10px;letter-spacing:0.1px;color:#a8a8a8">255</div></div>
<div style="left:365px;top:109px;height:3px;width:16px;overflow:hidden"><div style="position:relative;top:-1.5px;font-family:'Liberation Sans',sans-serif;font-weight:bold;font-size:8.6px;line-height:10px;letter-spacing:0.1px;color:#a8a8a8">255</div></div>
<div style="left:390px;top:100px;font-family:'Liberation Sans',sans-serif;font-weight:bold;font-size:8.6px;line-height:10px;letter-spacing:0.1px;color:#000080">FF</div>
<div style="left:390px;top:96.5px;height:3px;width:12px;overflow:hidden"><div style="position:relative;top:-4px;font-family:'Liberation Sans',sans-serif;font-weight:bold;font-size:8.6px;line-height:10px;letter-spacing:0.1px;color:#a8a8a8">FF</div></div>
<div style="left:390px;top:109px;height:3px;width:12px;overflow:hidden"><div style="position:relative;top:-1.5px;font-family:'Liberation Sans',sans-serif;font-weight:bold;font-size:8.6px;line-height:10px;letter-spacing:0.1px;color:#a8a8a8">FF</div></div>
<div style="left:410px;top:100px;font-family:'Liberation Sans',sans-serif;font-weight:bold;font-size:8.6px;line-height:10px;letter-spacing:0.1px;color:#000080">111</div>
<div style="left:410px;top:96.5px;height:3px;width:16px;overflow:hidden"><div style="position:relative;top:-4px;font-family:'Liberation Sans',sans-serif;font-weight:bold;font-size:8.6px;line-height:10px;letter-spacing:0.1px;color:#a8a8a8">111</div></div>
<div style="left:410px;top:109px;height:3px;width:16px;overflow:hidden"><div style="position:relative;top:-1.5px;font-family:'Liberation Sans',sans-serif;font-weight:bold;font-size:8.6px;line-height:10px;letter-spacing:0.1px;color:#a8a8a8">111</div></div>
<div style="left:438.5px;top:97.5px;font-size:7.6px;font-weight:bold;line-height:8px;color:#000080;letter-spacing:0.2px">LOHI</div>
<div style="left:438.5px;top:104.5px;font-size:7.6px;font-weight:bold;line-height:8px;color:#a8a8a8;letter-spacing:0.2px">HILO</div>
<svg style="left:462px;top:99px" width="17" height="11" viewBox="0 0 17 11" shape-rendering="auto"><path d="M1 4.5 H7 M4 1.5 V7.5" stroke="#000080" stroke-width="2.4"/><path d="M6 10 L11 1.5" stroke="#000080" stroke-width="1.6"/><path d="M10.5 5.5 H16.5" stroke="#000080" stroke-width="2.4"/></svg>
<svg style="left:491px;top:97px" width="16" height="15" viewBox="0 0 16 15" shape-rendering="auto"><path d="M1 14 L14.5 1.5" stroke="#000080" stroke-width="1.6"/><circle cx="4.5" cy="4.8" r="2.4" fill="none" stroke="#000080" stroke-width="2.2"/><circle cx="11.2" cy="10.8" r="2.4" fill="none" stroke="#000080" stroke-width="2.2"/></svg>
<svg style="left:515px;top:96px" width="15" height="16" viewBox="0 0 15 16" shape-rendering="auto"><path d="M7.5 2.5 L13 14 H2 Z" fill="none" stroke="#000080" stroke-width="2.6" stroke-linejoin="miter"/><rect x="1" y="12.5" width="13" height="2.5" fill="#000080"/></svg>
<svg style="left:538px;top:98px" width="8" height="10" viewBox="0 0 8 10" shape-rendering="auto"><path d="M2 5 L6.5 9 M6.5 5 L2 9" stroke="#000080" stroke-width="1.8"/></svg>
<div style="left:544px;top:97px;font-family:'Liberation Serif',serif;font-size:14.5px;font-weight:bold;line-height:14px;color:#000080">1</div>
<div style="left:559px;top:98px;font-size:11px;font-weight:bold;line-height:12px;color:#000080;letter-spacing:-0.4px;transform:scaleX(0.92);transform-origin:left">Org</div>
<div style="left:583px;top:96.5px;font-size:9.2px;font-weight:bold;line-height:7px;color:#a8a8a8;letter-spacing:-0.2px">Org<br>Org</div>
<svg style="left:8px;top:119px" width="20" height="19" viewBox="0 0 20 19" shape-rendering="auto"><rect x="2" y="7.5" width="2.6" height="9.5" fill="#0000e0"/><rect x="5.8" y="11" width="2.6" height="6" fill="#0000e0"/><rect x="10" y="9" width="2.6" height="8" fill="#0000e0"/><path d="M8.5 5.5 L18 15.5" stroke="#000" stroke-width="2.2"/><rect x="8" y="5" width="2" height="2" fill="#fff"/><path d="M13 1.5h1M17 3h1M15.5 6h1M11 3.5h1" stroke="#d8d000" stroke-width="1.2"/></svg>
<svg style="left:32px;top:119px" width="20" height="19" viewBox="0 0 20 19" shape-rendering="auto"><rect x="2" y="9" width="8" height="8" fill="#b4b4b4"/><path d="M2 11 H10 M2 13 H10 M2 15 H10 M4 9 V17 M6 9 V17 M8 9 V17" stroke="#c8c8c8" stroke-width="0.8"/><path d="M5 4 L15 15.5" stroke="#a0a0a0" stroke-width="2.2"/><path d="M10 1.5h1M14 3h1M12.5 6h1" stroke="#a8a8a8" stroke-width="1.2"/></svg>
<svg style="left:54px;top:119px" width="20" height="19" viewBox="0 0 20 19" shape-rendering="auto"><path d="M2 13 L5 9.5 H12 L9 17 H2 Z" fill="none" stroke="#a8a8a8" stroke-width="1.3"/><path d="M4 13 H8 M4 15 H7" stroke="#b0b0b0"/><path d="M7 4 L17 15.5" stroke="#a0a0a0" stroke-width="2.2"/><path d="M12 1.5h1M16 3h1M14.5 6h1" stroke="#a8a8a8" stroke-width="1.2"/></svg>
<svg style="left:84px;top:120px" width="18" height="17" viewBox="0 0 18 17" shape-rendering="auto"><rect x="1" y="1" width="8.5" height="8" fill="#000080"/><rect x="7.5" y="6.5" width="9" height="9" fill="#fff" stroke="#000080" stroke-width="1.6"/><path d="M10.5 9 H14 M10.5 9 V13.5 M10.5 11 H13" stroke="#000080" stroke-width="1.6"/><circle cx="8" cy="7.5" r="2.6" fill="#10e010"/><path d="M5 4.5 L8 7.5" stroke="#10e010" stroke-width="2.2"/></svg>
<svg style="left:113px;top:120px" width="18" height="17" viewBox="0 0 18 17" shape-rendering="auto"><rect x="1" y="1" width="4" height="1.1" fill="#000080"/><rect x="1" y="3" width="4" height="1.1" fill="#000080"/><rect x="1" y="5" width="4" height="1.1" fill="#000080"/><rect x="1" y="7" width="4" height="1.1" fill="#000080"/><rect x="1" y="9" width="4" height="1.1" fill="#000080"/><rect x="1" y="11" width="4" height="1.1" fill="#000080"/><rect x="1" y="13" width="4" height="1.1" fill="#000080"/><rect x="1" y="15" width="4" height="1.1" fill="#000080"/><path d="M7 5 H11.5 M9.8 3 L11.8 5 L9.8 7 M8 11.5 H12.5 M9.5 9.5 L7.5 11.5 L9.5 13.5" stroke="#000" stroke-width="1.3" fill="none"/><rect x="12.5" y="7.5" width="4" height="5.5" fill="#fff" stroke="#000" stroke-width="1.1"/></svg>
<div style="left:134px;top:118px;width:23px;height:21px;background:#c4c4c4;border:1px solid #a8a8a8;border-radius:3px;box-sizing:border-box;box-shadow:inset 1px 1px 0 #b0b0b0"></div>
<svg style="left:138px;top:121px" width="16" height="15" viewBox="0 0 16 15" shape-rendering="auto"><rect x="1" y="1" width="14" height="13" fill="#000080" stroke="#c00060" stroke-width="1.3"/><rect x="2.5" y="5" width="11" height="5" fill="#2830f0"/></svg>
<div style="left:157px;top:118px;width:23px;height:21px;background:#c4c4c4;border:1px solid #a8a8a8;border-radius:3px;box-sizing:border-box;box-shadow:inset 1px 1px 0 #b0b0b0"></div>
<svg style="left:160px;top:120px" width="18" height="17" viewBox="0 0 18 17" shape-rendering="auto"><rect x="1" y="1" width="4" height="1.1" fill="#000080"/><rect x="1" y="3" width="4" height="1.1" fill="#000080"/><rect x="1" y="5" width="4" height="1.1" fill="#000080"/><rect x="1" y="7" width="4" height="1.1" fill="#000080"/><rect x="1" y="9" width="4" height="1.1" fill="#000080"/><rect x="1" y="11" width="4" height="1.1" fill="#000080"/><rect x="1" y="13" width="4" height="1.1" fill="#000080"/><rect x="1" y="15" width="4" height="1.1" fill="#000080"/><path d="M6 8.5 H10.5 M8.5 6.5 L10.5 8.5 L8.5 10.5" stroke="#000" stroke-width="1.3" fill="none"/><path d="M12.5 5.5v6M14.5 5.5v6M16.5 5.5v6" stroke="#000" stroke-width="1.1"/></svg>
<div style="left:255px;top:121px;width:15px;height:6px;border:1px solid #b0b0b0;box-sizing:border-box;background:#dcdcdc"></div>
<div style="left:255px;top:130px;width:15px;height:6px;border:1px solid #b0b0b0;box-sizing:border-box;background:#dcdcdc"></div>
<svg style="left:259px;top:122px" width="7" height="4" viewBox="0 0 7 4" shape-rendering="auto"><path d="M0.5 3.5 L3.5 0.5 L6.5 3.5" fill="none" stroke="#a0a0a0"/></svg>
<svg style="left:259px;top:131px" width="7" height="4" viewBox="0 0 7 4" shape-rendering="auto"><path d="M0.5 0.5 L3.5 3.5 L6.5 0.5" fill="none" stroke="#a0a0a0"/></svg>
<div style="left:271px;top:121px;width:15px;height:6px;border:1px solid #b0b0b0;box-sizing:border-box;background:#dcdcdc"></div>
<div style="left:271px;top:130px;width:15px;height:6px;border:1px solid #b0b0b0;box-sizing:border-box;background:#dcdcdc"></div>
<svg style="left:275px;top:122px" width="7" height="4" viewBox="0 0 7 4" shape-rendering="auto"><path d="M0.5 3.5 L3.5 0.5 L6.5 3.5" fill="none" stroke="#a0a0a0"/></svg>
<svg style="left:275px;top:131px" width="7" height="4" viewBox="0 0 7 4" shape-rendering="auto"><path d="M0.5 0.5 L3.5 3.5 L6.5 0.5" fill="none" stroke="#a0a0a0"/></svg>
<div style="left:361px;top:121px;width:15px;height:6px;border:1px solid #b0b0b0;box-sizing:border-box;background:#dcdcdc"></div>
<div style="left:361px;top:130px;width:15px;height:6px;border:1px solid #b0b0b0;box-sizing:border-box;background:#dcdcdc"></div>
<svg style="left:365px;top:122px" width="7" height="4" viewBox="0 0 7 4" shape-rendering="auto"><path d="M0.5 3.5 L3.5 0.5 L6.5 3.5" fill="none" stroke="#a0a0a0"/></svg>
<svg style="left:365px;top:131px" width="7" height="4" viewBox="0 0 7 4" shape-rendering="auto"><path d="M0.5 0.5 L3.5 3.5 L6.5 0.5" fill="none" stroke="#a0a0a0"/></svg>
<div style="left:446px;top:121px;width:15px;height:6px;border:1px solid #b0b0b0;box-sizing:border-box;background:#dcdcdc"></div>
<div style="left:446px;top:130px;width:15px;height:6px;border:1px solid #b0b0b0;box-sizing:border-box;background:#dcdcdc"></div>
<svg style="left:450px;top:122px" width="7" height="4" viewBox="0 0 7 4" shape-rendering="auto"><path d="M0.5 3.5 L3.5 0.5 L6.5 3.5" fill="none" stroke="#a0a0a0"/></svg>
<svg style="left:450px;top:131px" width="7" height="4" viewBox="0 0 7 4" shape-rendering="auto"><path d="M0.5 0.5 L3.5 3.5 L6.5 0.5" fill="none" stroke="#a0a0a0"/></svg>
<div style="left:463px;top:117px;width:1px;height:23px;background:#a8a8a8"></div>
<div style="left:0px;top:140px;width:278px;height:578px;background:#d4d4d4"></div>
<div style="left:0px;top:140px;width:1366px;height:1px;background:#a0a0a0"></div>
<div style="left:266px;top:141px;width:1px;height:577px;background:#a0a0a0"></div>
<div style="left:267px;top:141px;width:1px;height:577px;background:#f4f4f4"></div>
<div style="left:0px;top:141px;width:278px;height:1px;background:#ececec"></div>
<div style="left:268px;top:142px;width:10px;height:576px;background:#d8d8d8"></div>
<div style="left:5px;top:146px;width:21px;height:21px;border:1px solid #a8a8a8;border-radius:3px;box-sizing:border-box;background:linear-gradient(#e8e8e8,#d0d0d0)"></div>
<div style="left:5px;top:169px;width:21px;height:21px;border:1px solid #a8a8a8;border-radius:3px;box-sizing:border-box;background:linear-gradient(#e8e8e8,#d0d0d0)"></div>
<div style="left:34px;top:146px;width:46px;height:44px;border:1px solid #a8a8a8;border-radius:3px;box-sizing:border-box;background:linear-gradient(#e8e8e8,#d0d0d0)"></div>
<div style="left:82px;top:146px;width:15px;height:44px;border:1px solid #a8a8a8;border-radius:3px;box-sizing:border-box;background:linear-gradient(#e8e8e8,#d0d0d0)"></div>
<div style="left:109px;top:146px;width:46px;height:44px;border:1px solid #a8a8a8;border-radius:3px;box-sizing:border-box;background:linear-gradient(#ececec,#e0e0e0)"></div>
<div style="left:164px;top:146px;width:22px;height:21px;border:1px solid #a8a8a8;border-radius:3px;box-sizing:border-box;background:linear-gradient(#e8e8e8,#d0d0d0)"></div>
<div style="left:187px;top:146px;width:22px;height:21px;border:1px solid #a8a8a8;border-radius:3px;box-sizing:border-box;background:linear-gradient(#e8e8e8,#d0d0d0)"></div>
<div style="left:211px;top:146px;width:22px;height:21px;border:1px solid #a8a8a8;border-radius:3px;box-sizing:border-box;background:linear-gradient(#e8e8e8,#d0d0d0)"></div>
<div style="left:164px;top:169px;width:22px;height:21px;border:1px solid #a8a8a8;border-radius:3px;box-sizing:border-box;background:linear-gradient(#e8e8e8,#d0d0d0)"></div>
<div style="left:187px;top:169px;width:22px;height:21px;border:1px solid #a8a8a8;border-radius:3px;box-sizing:border-box;background:linear-gradient(#e8e8e8,#d0d0d0)"></div>
<div style="left:4px;top:196px;width:260px;height:1px;background:#a8a8a8"></div>
<div style="left:4px;top:197px;width:260px;height:1px;background:#f8f8f8"></div>
<div style="left:3px;top:205px;width:256px;height:21px;background:#fff;border:1px solid #e0e0e0;box-sizing:border-box"></div>
<div style="left:6.5px;top:209px;font-size:11.5px;line-height:12px;color:#000;transform:scaleX(0.895);transform-origin:0 0">Projects, Versions &amp; Maps:</div>
<div style="left:244px;top:207px;width:14px;height:17px;background:linear-gradient(#f4f4f4,#dcdcdc);border:1px solid #b8b8b8;box-sizing:border-box"></div>
<svg style="left:246px;top:213px;shape-rendering:auto" width="10" height="6" viewBox="0 0 10 6" shape-rendering="crispEdges"><path d="M1.5 1 L5 4.5 L8.5 1" stroke="#4a6a8a" stroke-width="2" fill="none"/></svg>
<div style="left:3.5px;top:234.5px;font-size:11.5px;line-height:12px;color:#000;transform:scaleX(0.87);transform-origin:0 0">Filter:</div>
<div style="left:40px;top:230px;width:22px;height:18px;border:1px solid #a8a8a8;border-radius:3px;box-sizing:border-box;background:linear-gradient(#e8e8e8,#d0d0d0)"></div>
<div style="left:64px;top:230px;width:22px;height:18px;border:1px solid #a8a8a8;border-radius:3px;box-sizing:border-box;background:linear-gradient(#e8e8e8,#d0d0d0)"></div>
<div style="left:88px;top:230px;width:22px;height:18px;border:1px solid #a8a8a8;border-radius:3px;box-sizing:border-box;background:linear-gradient(#e8e8e8,#d0d0d0)"></div>
<div style="left:112px;top:230px;width:22px;height:18px;border:1px solid #a8a8a8;border-radius:3px;box-sizing:border-box;background:linear-gradient(#e8e8e8,#d0d0d0)"></div>
<div style="left:136px;top:230px;width:22px;height:18px;border:1px solid #a8a8a8;border-radius:3px;box-sizing:border-box;background:linear-gradient(#e8e8e8,#d0d0d0)"></div>
<div style="left:160px;top:230px;width:27px;height:18px;border:1px solid #a8a8a8;border-radius:3px;box-sizing:border-box;background:linear-gradient(#e8e8e8,#d0d0d0)"></div>
<div style="left:167.5px;top:233px;font-size:11px;line-height:12px;color:#000;letter-spacing:0.4px">Off</div>
<div style="left:246px;top:230px;width:16px;height:18px;border:1px solid #a8a8a8;border-radius:3px;box-sizing:border-box;background:linear-gradient(#e8e8e8,#d0d0d0)"></div>
<svg style="left:249px;top:236px;shape-rendering:auto" width="12" height="7" viewBox="0 0 12 7" shape-rendering="crispEdges"><path d="M0 0 H11 L5.5 6 Z" fill="#000"/></svg>
<svg style="left:54px;top:243px" width="8" height="5" viewBox="0 0 8 5"><path d="M0 0 H6.5 L3.25 3.5 Z" fill="#000"/></svg>
<svg style="left:78px;top:243px" width="8" height="5" viewBox="0 0 8 5"><path d="M0 0 H6.5 L3.25 3.5 Z" fill="#000"/></svg>
<svg style="left:102px;top:243px" width="8" height="5" viewBox="0 0 8 5"><path d="M0 0 H6.5 L3.25 3.5 Z" fill="#000"/></svg>
<svg style="left:126px;top:243px" width="8" height="5" viewBox="0 0 8 5"><path d="M0 0 H6.5 L3.25 3.5 Z" fill="#000"/></svg>
<svg style="left:150px;top:243px" width="8" height="5" viewBox="0 0 8 5"><path d="M0 0 H6.5 L3.25 3.5 Z" fill="#000"/></svg>
<svg style="left:44px;top:234px" width="14" height="7" viewBox="0 0 14 7" shape-rendering="crispEdges"><rect x="0" y="1" width="3" height="4" fill="#a0a0a0"/><rect x="4" y="1" width="3" height="4" fill="#a0a0a0"/><rect x="8" y="1" width="3" height="4" fill="#a0a0a0"/><rect x="12" y="1" width="2" height="4" fill="#a0a0a0"/></svg>
<svg style="left:69px;top:232px" width="12" height="12" viewBox="0 0 12 12"><path d="M6 1 L11 11 H1 Z" fill="none" stroke="#a0a0a0" stroke-width="2.2"/></svg>
<svg style="left:93px;top:232px" width="12" height="12" viewBox="0 0 12 12" shape-rendering="crispEdges"><rect x="1" y="1" width="2" height="2" fill="#a8a8a8"/><rect x="1" y="4" width="2" height="7" fill="#a8a8a8"/><rect x="4" y="1" width="8" height="2" fill="#a8a8a8"/></svg>
<svg style="left:117px;top:232px" width="12" height="12" viewBox="0 0 12 12" shape-rendering="crispEdges"><rect x="3" y="1" width="1" height="11" fill="#606060"/><rect x="4" y="2" width="5" height="5" fill="#808080"/><rect x="9" y="4" width="2" height="4" fill="#808080"/></svg>
<div style="left:144px;top:232px;font-size:12px;font-weight:bold;line-height:13px;color:#b0b0b0;letter-spacing:-1.2px">KK</div>
<svg style="left:9px;top:148px" width="15" height="17" viewBox="0 0 15 17" shape-rendering="crispEdges"><path d="M1.5 1.5 H11.5 V11.5 L8 15 H1.5 Z" fill="#fff" stroke="#000" stroke-width="1.2"/><path d="M8 15 V11.5 H11.5" fill="none" stroke="#000" stroke-width="1.2"/></svg>
<svg style="left:8px;top:171px" width="16" height="17" viewBox="0 0 16 17" shape-rendering="crispEdges"><rect x="1" y="1" width="13.5" height="14.5" fill="#808020" stroke="#000" stroke-width="1.2"/><rect x="3.5" y="1.5" width="8.5" height="5.5" fill="#d0d0d0"/><rect x="3.5" y="10" width="8.5" height="5" fill="#000"/><rect x="8.5" y="11" width="2" height="3" fill="#d0d0d0"/></svg>
<svg style="left:40px;top:150px" width="34" height="34" viewBox="0 0 34 34" shape-rendering="crispEdges"><path d="M2 30 V13 H10 L12.5 15.5 H21 V20" fill="#f8f880" stroke="#000" stroke-width="2"/><path d="M2 31 L6.5 21 H31.5 L21.5 31 Z" fill="#808010" stroke="#000" stroke-width="2" stroke-linejoin="round"/><path d="M17.5 8 Q24 1 29 7" fill="none" stroke="#000" stroke-width="2.4"/><path d="M24.5 7 H32 L30.5 12 Z" fill="#000"/></svg>
<svg style="left:85px;top:165px" width="10" height="8" viewBox="0 0 10 8" shape-rendering="crispEdges"><path d="M0 0 H10 L5 6 Z" fill="#000"/></svg>
<svg style="left:114px;top:151px" width="34" height="32" viewBox="0 0 34 32" shape-rendering="crispEdges"><path d="M2 9 H20 V14 H30 V22 H2 Z" fill="#9a9a9a"/><path d="M6 22 L9 16 H32 L27 29 H2 Z" fill="#9a9a9a"/><rect x="8" y="6" width="12" height="4" fill="#9a9a9a"/><path d="M21 4 Q24 1 29 4 L31 3 V9 H25 L27 7 Q24 5 22 7 Z" fill="#9a9a9a"/><path d="M9 11 H13 V14 M15 11 H19 V14" stroke="#e8e8e8" stroke-width="1.6" fill="none"/><rect x="2" y="10" width="3" height="14" fill="#c0c0c0"/><path d="M2.5 11v12M4 12v11" stroke="#9a9a9a" stroke-dasharray="1 1"/></svg>
<svg style="left:166px;top:149px" width="19" height="16" viewBox="0 0 19 16" shape-rendering="crispEdges"><path d="M7.5 1.5 H15.5 V11 L12.5 14.5 H7.5 Z" fill="#fff" stroke="#000" stroke-width="1.2"/><path d="M12.5 14.5 V11 H15.5" fill="none" stroke="#000" stroke-width="1.1"/><path d="M1.5 7.5 H5" stroke="#a00000" stroke-width="2"/><path d="M4 4.5 L7.5 7.5 L4 10.5 Z" fill="#a00000"/></svg>
<svg style="left:189px;top:148px" width="19" height="18" viewBox="0 0 19 18" shape-rendering="crispEdges"><path d="M1.5 8.5 H5" stroke="#a00000" stroke-width="2"/><path d="M4 5.5 L7.5 8.5 L4 11.5 Z" fill="#a00000"/><path d="M7.5 3 L17 15" stroke="#000" stroke-width="2.2"/><rect x="7" y="2.5" width="2" height="2" fill="#fff"/><path d="M9 10.5v4M10.5 12h3v2.5h-3" stroke="#3050c0" stroke-width="1.2" fill="none"/><path d="M12 2h1M16 1h1M15 5h1M17 8h1" stroke="#d8d800" stroke-width="1.2"/><rect x="11" y="1" width="7" height="8" fill="#f0f0c0" opacity="0.35"/></svg>
<svg style="left:214px;top:148px" width="17" height="17" viewBox="0 0 17 17" shape-rendering="crispEdges"><path d="M3.5 6 L6.5 1.5 L8.5 4 L10.5 1.5 L13.5 6" fill="none" stroke="#000" stroke-width="1.5"/><circle cx="4" cy="7.5" r="3" fill="#2040d0" stroke="#000"/><circle cx="13" cy="7.5" r="3" fill="#2040d0" stroke="#000"/><path d="M3 9.5v5.5M3 9.5h4M3 12h3M3 15h4 M9.5 9.5v5.5M9.5 9.5h3.5v3h-3.5" stroke="#10c010" stroke-width="1.8" fill="none"/><path d="M3 9.5v5.5M9.5 9.5v5.5" stroke="#006000" stroke-width="0.6"/></svg>
<svg style="left:166px;top:172px" width="19" height="16" viewBox="0 0 19 16" shape-rendering="crispEdges"><path d="M1.5 1.5 H9.5 V11 L6.5 14.5 H1.5 Z" fill="#fff" stroke="#000" stroke-width="1.2"/><path d="M6.5 14.5 V11 H9.5" fill="none" stroke="#000" stroke-width="1.1"/><path d="M11 7.5 H14.5" stroke="#a00000" stroke-width="2"/><path d="M13.5 4.5 L17 7.5 L13.5 10.5 Z" fill="#a00000"/></svg>
<svg style="left:190px;top:173px" width="17" height="14" viewBox="0 0 17 14" shape-rendering="crispEdges"><rect x="1" y="1.5" width="13" height="8.5" fill="#fff" stroke="#000" stroke-width="1.4"/><path d="M2.5 2.5 H13 M2.5 9 H13" stroke="#c03060" stroke-dasharray="1 1"/><path d="M4 4.5h6M4 6.5h6" stroke="#000" stroke-width="1.2"/><circle cx="13" cy="10.5" r="3" fill="#2060c0"/><path d="M12 9.5 h2 M11.5 11h2" stroke="#10a010"/></svg>
<div style="left:3px;top:252px;width:253px;height:463px;background:#0000a0;border:1px solid #000080;box-sizing:border-box"></div>
<div style="left:4px;top:253px;width:251px;height:20px;background:linear-gradient(#f0f0f0,#e4e4e4 50%,#dcdcdc)"></div>
<div style="left:4px;top:272px;width:251px;height:1px;background:#e8e8f8"></div>
<div style="left:21px;top:258px;width:1px;height:10px;background:#c0c0c0"></div>
<div style="left:92px;top:258px;width:1px;height:10px;background:#c0c0c0"></div>
<div style="left:172px;top:258px;width:1px;height:10px;background:#c0c0c0"></div>
<div style="left:250px;top:258px;width:1px;height:10px;background:#c0c0c0"></div>
<svg style="left:36px;top:257px;shape-rendering:auto" width="10" height="9" viewBox="0 0 10 9" shape-rendering="crispEdges"><path d="M4.5 1 L1 7 H8 Z" fill="#fff" stroke="#a0a0a0"/></svg>
<div style="left:58px;top:256px;font-size:11px;line-height:12px;color:#000">Addr...</div>
<div style="left:103px;top:256px;font-size:11px;line-height:12px;color:#000">Name</div>
<div style="left:184px;top:256px;font-size:11px;line-height:12px;color:#000">Size</div>
<div style="left:5px;top:273px;font-size:11px;line-height:14px;color:#c8ccff;white-space:pre;font-weight:bold;letter-spacing:0.4px">Peugeot Partner (Original)</div>
<svg style="left:6px;top:287px" width="16" height="13" viewBox="0 0 16 13" shape-rendering="auto"><path d="M1 2 H6 L7.5 3.5 H14 V12 H1 Z" fill="#f0e890" stroke="#806000" stroke-width="0.8"/><path d="M1 12 L3 6 H15.5 L14 12 Z" fill="#f8f0a0" stroke="#806000" stroke-width="0.8"/></svg>
<div style="left:24px;top:287px;font-size:11px;line-height:14px;color:#c8ccff;white-space:pre;font-weight:bold;letter-spacing:0.35px">Hexdump</div>
<div style="left:24px;top:301px;font-size:11px;line-height:14px;color:#c8ccff;white-space:pre;font-weight:bold;font-size:11px;letter-spacing:0.75px">00000</div>
<div style="left:94px;top:301px;width:80.5px;overflow:hidden;font-size:11px;line-height:14px;color:#c8ccff;white-space:pre;font-weight:bold;font-size:11px;letter-spacing:0.45px">Hexdump</div>
<svg style="left:6px;top:315px" width="16" height="13" viewBox="0 0 16 13" shape-rendering="auto"><path d="M1 2 H6 L7.5 3.5 H14 V12 H1 Z" fill="#f0e890" stroke="#806000" stroke-width="0.8"/><path d="M1 12 L3 6 H15.5 L14 12 Z" fill="#f8f0a0" stroke="#806000" stroke-width="0.8"/></svg>
<div style="left:24px;top:315px;font-size:11px;line-height:14px;color:#c8ccff;white-space:pre;font-weight:bold;letter-spacing:0.35px">My maps</div>
<div style="left:24px;top:329px;font-size:11px;line-height:14px;color:#c8ccff;white-space:pre;font-weight:bold;font-size:11px;letter-spacing:0.75px">74960</div>
<div style="left:94px;top:329px;width:80.5px;overflow:hidden;font-size:11px;line-height:14px;color:#c8ccff;white-space:pre;font-weight:bold;font-size:11px;letter-spacing:0.45px">Axe Maf</div>
<div style="left:177.5px;top:336px;width:7.5px;height:1px;background:#c8ccff"></div>
<div style="left:189px;top:329px;font-size:11px;line-height:14px;color:#c8ccff;white-space:pre;font-weight:bold;font-size:11px;letter-spacing:0.5px">16x1</div>
<div style="left:24px;top:343px;font-size:11px;line-height:14px;color:#c8ccff;white-space:pre;font-size:10.5px">74AE4</div>
<div style="left:94px;top:343px;width:80.5px;overflow:hidden;font-size:11px;line-height:14px;color:#c8ccff;white-space:pre;font-size:10.8px">Axe IQ pour com</div>
<div style="left:174px;top:350px;width:12px;height:1px;background:#c8ccff"></div>
<div style="left:189px;top:343px;font-size:11px;line-height:14px;color:#c8ccff;white-space:pre;font-size:10.8px">21x1</div>
<div style="left:24px;top:357px;font-size:11px;line-height:14px;color:#c8ccff;white-space:pre;font-size:10.5px">74C98</div>
<div style="left:94px;top:357px;width:80.5px;overflow:hidden;font-size:11px;line-height:14px;color:#c8ccff;white-space:pre;font-size:10.8px">Axe RPM</div>
<div style="left:178.5px;top:364px;width:5px;height:1px;background:#c8ccff"></div>
<div style="left:189px;top:357px;font-size:11px;line-height:14px;color:#c8ccff;white-space:pre;font-size:10.8px">12x1</div>
<div style="left:24px;top:371px;font-size:11px;line-height:14px;color:#c8ccff;white-space:pre;font-size:10.5px">74CD4</div>
<div style="left:94px;top:371px;width:80.5px;overflow:hidden;font-size:11px;line-height:14px;color:#c8ccff;white-space:pre;font-size:10.8px">Axe NM pour com</div>
<div style="left:174px;top:378px;width:12px;height:1px;background:#c8ccff"></div>
<div style="left:189px;top:371px;font-size:11px;line-height:14px;color:#c8ccff;white-space:pre;font-size:10.8px">21x1</div>
<div style="left:24px;top:385px;font-size:11px;line-height:14px;color:#c8ccff;white-space:pre;font-weight:bold;font-size:11px;letter-spacing:0.75px">7558B</div>
<div style="left:94px;top:385px;width:80.5px;overflow:hidden;font-size:11px;line-height:14px;color:#c8ccff;white-space:pre;font-weight:bold;font-size:11px;letter-spacing:0.45px">Map COUPLE</div>
<div style="left:176.5px;top:391px;width:9.5px;height:2px;background:#c8ccff"></div>
<div style="left:189px;top:385px;font-size:11px;line-height:14px;color:#c8ccff;white-space:pre;font-weight:bold;font-size:11px;letter-spacing:0.5px">20x4</div>
<div style="left:24px;top:399px;font-size:11px;line-height:14px;color:#c8ccff;white-space:pre;font-weight:bold;font-size:11px;letter-spacing:0.75px">76198</div>
<div style="left:94px;top:399px;width:80.5px;overflow:hidden;font-size:11px;line-height:14px;color:#c8ccff;white-space:pre;font-weight:bold;font-size:11px;letter-spacing:0.45px">Map Pedale 2</div>
<div style="left:177.5px;top:403px;width:7.5px;height:7px;background:linear-gradient(60deg,#6868c8,#e8e8ff)"></div>
<div style="left:189px;top:399px;font-size:11px;line-height:14px;color:#c8ccff;white-space:pre;font-weight:bold;font-size:11px;letter-spacing:0.5px">16x16</div>
<div style="left:24px;top:413px;font-size:11px;line-height:14px;color:#c8ccff;white-space:pre;font-size:10.5px">76398</div>
<div style="left:94px;top:413px;width:80.5px;overflow:hidden;font-size:11px;line-height:14px;color:#c8ccff;white-space:pre;font-size:10.8px">Map Pedale 1</div>
<div style="left:177.5px;top:417px;width:7.5px;height:7px;background:linear-gradient(60deg,#6868c8,#e8e8ff)"></div>
<div style="left:189px;top:413px;font-size:11px;line-height:14px;color:#c8ccff;white-space:pre;font-size:10.8px">16x16</div>
<div style="left:24px;top:427px;font-size:11px;line-height:14px;color:#c8ccff;white-space:pre;font-size:10.5px">765BC</div>
<div style="left:94px;top:427px;width:80.5px;overflow:hidden;font-size:11px;line-height:14px;color:#c8ccff;white-space:pre;font-size:10.8px">Map  prail</div>
<div style="left:177.5px;top:431px;width:7.5px;height:7px;background:linear-gradient(60deg,#6868c8,#e8e8ff)"></div>
<div style="left:189px;top:427px;font-size:11px;line-height:14px;color:#c8ccff;white-space:pre;font-size:10.8px">16x16</div>
<div style="left:24px;top:441px;font-size:11px;line-height:14px;color:#c8ccff;white-space:pre;font-size:10.5px">769BC</div>
<div style="left:94px;top:441px;width:80.5px;overflow:hidden;font-size:11px;line-height:14px;color:#c8ccff;white-space:pre;font-size:10.8px">Map limite prail</div>
<div style="left:177.5px;top:446px;width:7.5px;height:4px;background:linear-gradient(60deg,#6868c8,#e8e8ff)"></div>
<div style="left:189px;top:441px;font-size:11px;line-height:14px;color:#c8ccff;white-space:pre;font-size:10.8px">16x8</div>
<div style="left:24px;top:455px;font-size:11px;line-height:14px;color:#c8ccff;white-space:pre;font-weight:bold;font-size:11px;letter-spacing:0.75px">78130</div>
<div style="left:94px;top:455px;width:80.5px;overflow:hidden;font-size:11px;line-height:14px;color:#c8ccff;white-space:pre;font-weight:bold;font-size:11px;letter-spacing:0.45px">Map Smoke</div>
<div style="left:177.5px;top:459px;width:7.5px;height:6px;background:linear-gradient(60deg,#6868c8,#e8e8ff)"></div>
<div style="left:189px;top:455px;font-size:11px;line-height:14px;color:#c8ccff;white-space:pre;font-weight:bold;font-size:11px;letter-spacing:0.5px">16x12</div>
<div style="left:24px;top:469px;font-size:11px;line-height:14px;color:#c8ccff;white-space:pre;font-size:10.5px">78532</div>
<div style="left:94px;top:469px;width:80.5px;overflow:hidden;font-size:11px;line-height:14px;color:#c8ccff;white-space:pre;font-size:10.8px">Temps injection 1</div>
<div style="left:177.5px;top:473px;width:7.5px;height:7px;background:linear-gradient(60deg,#6868c8,#e8e8ff)"></div>
<div style="left:189px;top:469px;font-size:11px;line-height:14px;color:#c8ccff;white-space:pre;font-size:10.8px">16x16</div>
<div style="left:24px;top:483px;font-size:11px;line-height:14px;color:#c8ccff;white-space:pre;font-size:10.5px">78732</div>
<div style="left:94px;top:483px;width:80.5px;overflow:hidden;font-size:11px;line-height:14px;color:#c8ccff;white-space:pre;font-size:10.8px">Temps injection 2</div>
<div style="left:177.5px;top:487px;width:7.5px;height:7px;background:linear-gradient(60deg,#6868c8,#e8e8ff)"></div>
<div style="left:189px;top:483px;font-size:11px;line-height:14px;color:#c8ccff;white-space:pre;font-size:10.8px">16x16</div>
<div style="left:24px;top:497px;font-size:11px;line-height:14px;color:#c8ccff;white-space:pre;font-size:10.5px">78BA2</div>
<div style="left:94px;top:497px;width:80.5px;overflow:hidden;font-size:11px;line-height:14px;color:#c8ccff;white-space:pre;font-size:10.8px">Temps injection 3</div>
<div style="left:177.5px;top:501px;width:7.5px;height:7px;background:linear-gradient(60deg,#6868c8,#e8e8ff)"></div>
<div style="left:189px;top:497px;font-size:11px;line-height:14px;color:#c8ccff;white-space:pre;font-size:10.8px">16x16</div>
<div style="left:24px;top:511px;font-size:11px;line-height:14px;color:#c8ccff;white-space:pre;font-size:10.5px">78DA2</div>
<div style="left:94px;top:511px;width:80.5px;overflow:hidden;font-size:11px;line-height:14px;color:#c8ccff;white-space:pre;font-size:10.8px">Temps injection 4</div>
<div style="left:177.5px;top:515px;width:7.5px;height:7px;background:linear-gradient(60deg,#6868c8,#e8e8ff)"></div>
<div style="left:189px;top:511px;font-size:11px;line-height:14px;color:#c8ccff;white-space:pre;font-size:10.8px">16x16</div>
<div style="left:24px;top:525px;font-size:11px;line-height:14px;color:#c8ccff;white-space:pre;font-size:10.5px">79212</div>
<div style="left:94px;top:525px;width:80.5px;overflow:hidden;font-size:11px;line-height:14px;color:#c8ccff;white-space:pre;font-size:10.8px">Injection mi charge</div>
<div style="left:177.5px;top:529px;width:7.5px;height:7px;background:linear-gradient(60deg,#6868c8,#e8e8ff)"></div>
<div style="left:189px;top:525px;font-size:11px;line-height:14px;color:#c8ccff;white-space:pre;font-size:10.8px">16x16</div>
<div style="left:24px;top:539px;font-size:11px;line-height:14px;color:#c8ccff;white-space:pre;font-size:10.5px">79412</div>
<div style="left:94px;top:539px;width:80.5px;overflow:hidden;font-size:11px;line-height:14px;color:#c8ccff;white-space:pre;font-size:10.8px">Correction inj FCT</div>
<div style="left:177.5px;top:543px;width:7.5px;height:7px;background:linear-gradient(60deg,#6868c8,#e8e8ff)"></div>
<div style="left:189px;top:539px;font-size:11px;line-height:14px;color:#c8ccff;white-space:pre;font-size:10.8px">16x16</div>
<svg style="left:6px;top:553px" width="16" height="13" viewBox="0 0 16 13" shape-rendering="auto"><path d="M1 2 H6 L7.5 3.5 H14 V12 H1 Z" fill="#f0e890" stroke="#806000" stroke-width="0.8"/><path d="M1 12 L3 6 H15.5 L14 12 Z" fill="#f8f0a0" stroke="#806000" stroke-width="0.8"/></svg>
<div style="left:24px;top:553px;font-size:11px;line-height:14px;color:#c8ccff;white-space:pre;font-weight:bold;letter-spacing:0.35px">Principale maps a moddées</div>
<div style="left:24px;top:567px;font-size:11px;line-height:14px;color:#c8ccff;white-space:pre;font-size:10.5px">76F8E</div>
<div style="left:94px;top:567px;width:80.5px;overflow:hidden;font-size:11px;line-height:14px;color:#c8ccff;white-space:pre;font-size:10.8px">Map EGR</div>
<div style="left:177.5px;top:571px;width:7.5px;height:7px;background:linear-gradient(60deg,#6868c8,#e8e8ff)"></div>
<div style="left:189px;top:567px;font-size:11px;line-height:14px;color:#c8ccff;white-space:pre;font-size:10.8px">16x16</div>
<div style="left:24px;top:581px;font-size:11px;line-height:14px;color:#c8ccff;white-space:pre;font-weight:bold;font-size:11px;letter-spacing:0.75px">7733A</div>
<div style="left:94px;top:581px;width:80.5px;overflow:hidden;font-size:11px;line-height:14px;color:#c8ccff;white-space:pre;font-weight:bold;font-size:11px;letter-spacing:0.45px">Conversion co</div>
<div style="left:177.5px;top:582px;width:6.5px;height:11.5px;background:repeating-linear-gradient(#a8a8e0 0 1px,#6868b8 1px 2px)"></div>
<div style="left:189px;top:581px;font-size:11px;line-height:14px;color:#c8ccff;white-space:pre;font-weight:bold;font-size:11px;letter-spacing:0.5px">12x21</div>
<div style="left:24px;top:595px;font-size:11px;line-height:14px;color:#c8ccff;white-space:pre;font-size:10.5px">77532</div>
<div style="left:94px;top:595px;width:80.5px;overflow:hidden;font-size:11px;line-height:14px;color:#c8ccff;white-space:pre;font-size:10.8px">Conversion coup</div>
<div style="left:177.5px;top:596px;width:6.5px;height:11.5px;background:repeating-linear-gradient(#a8a8e0 0 1px,#6868b8 1px 2px)"></div>
<div style="left:189px;top:595px;font-size:11px;line-height:14px;color:#c8ccff;white-space:pre;font-size:10.8px">12x21</div>
<div style="left:24px;top:609px;font-size:11px;line-height:14px;color:#c8ccff;white-space:pre;font-weight:bold;font-size:11px;letter-spacing:0.75px">79E32</div>
<div style="left:94px;top:609px;width:80.5px;overflow:hidden;font-size:11px;line-height:14px;color:#c8ccff;white-space:pre;font-weight:bold;font-size:11px;letter-spacing:0.45px">Conversion IQ</div>
<div style="left:177.5px;top:610px;width:6.5px;height:11.5px;background:repeating-linear-gradient(#a8a8e0 0 1px,#6868b8 1px 2px)"></div>
<div style="left:189px;top:609px;font-size:11px;line-height:14px;color:#c8ccff;white-space:pre;font-weight:bold;font-size:11px;letter-spacing:0.5px">12x21</div>
<div style="left:24px;top:623px;font-size:11px;line-height:14px;color:#c8ccff;white-space:pre;font-size:10.5px">7A02A</div>
<div style="left:94px;top:623px;width:80.5px;overflow:hidden;font-size:11px;line-height:14px;color:#c8ccff;white-space:pre;font-size:10.8px">Conversion IQ cc</div>
<div style="left:177.5px;top:624px;width:6.5px;height:11.5px;background:repeating-linear-gradient(#a8a8e0 0 1px,#6868b8 1px 2px)"></div>
<div style="left:189px;top:623px;font-size:11px;line-height:14px;color:#c8ccff;white-space:pre;font-size:10.8px">12x21</div>
<div style="left:258px;top:403px;width:17px;height:52px;background:linear-gradient(90deg,#e8e8e8,#d8d8d8);border:1px solid #c0c0c0;box-sizing:border-box"></div>
<div style="left:267px;top:404px;width:1px;height:51px;background:#f8f8f8"></div>
<svg style="left:258px;top:420px;shape-rendering:auto" width="18" height="18" viewBox="0 0 18 18" shape-rendering="crispEdges"><path d="M8 2 L1 9.5 L8 17 Z M10 2 L17 9.5 L10 17 Z" fill="#000070"/></svg>
<div style="left:278px;top:141px;width:1088px;height:577px;background:#d4d4d4"></div>
<div style="left:278px;top:141px;width:1px;height:577px;background:#a0a0a0"></div>
<div style="left:279px;top:141px;width:1px;height:577px;background:#b8b8b8"></div>
<div style="left:278px;top:141px;width:1088px;height:1px;background:#a0a0a0"></div>
<div style="left:280px;top:142px;width:1068px;height:560px;background:#0000a0"></div>
<div style="left:809px;top:145px;font-family:'Liberation Mono',monospace;font-size:12px;letter-spacing:-0.2px;line-height:15px;white-space:pre;color:#c8ccff;">-(-,-)/IQ</div>
<div style="left:294px;top:160px;font-family:'Liberation Mono',monospace;font-size:12px;letter-spacing:-0.2px;line-height:15px;white-space:pre;color:#c8ccff;">MAF</div>
<div style="left:280px;top:175px;font-family:'Liberation Mono',monospace;font-size:12px;letter-spacing:-0.2px;line-height:15px;white-space:pre;color:#c8ccff;">RPM</div>
<div style="left:337px;top:160px;font-family:'Liberation Mono',monospace;font-size:12px;letter-spacing:-0.2px;line-height:15px;white-space:pre;color:#c8ccff;">20</div>
<div style="left:400px;top:175px;font-family:'Liberation Mono',monospace;font-size:12px;letter-spacing:-0.2px;line-height:15px;white-space:pre;color:#c8ccff;">64</div>
<div style="left:463px;top:160px;font-family:'Liberation Mono',monospace;font-size:12px;letter-spacing:-0.2px;line-height:15px;white-space:pre;color:#c8ccff;">106</div>
<div style="left:526px;top:175px;font-family:'Liberation Mono',monospace;font-size:12px;letter-spacing:-0.2px;line-height:15px;white-space:pre;color:#c8ccff;">176</div>
<div style="left:589px;top:160px;font-family:'Liberation Mono',monospace;font-size:12px;letter-spacing:-0.2px;line-height:15px;white-space:pre;color:#c8ccff;">291</div>
<div style="left:652px;top:175px;font-family:'Liberation Mono',monospace;font-size:12px;letter-spacing:-0.2px;line-height:15px;white-space:pre;color:#c8ccff;">414</div>
<div style="left:715px;top:160px;font-family:'Liberation Mono',monospace;font-size:12px;letter-spacing:-0.2px;line-height:15px;white-space:pre;color:#c8ccff;">756</div>
<div style="left:778px;top:175px;font-family:'Liberation Mono',monospace;font-size:12px;letter-spacing:-0.2px;line-height:15px;white-space:pre;color:#c8ccff;">838</div>
<div style="left:841px;top:160px;font-family:'Liberation Mono',monospace;font-size:12px;letter-spacing:-0.2px;line-height:15px;white-space:pre;color:#c8ccff;">872</div>
<div style="left:904px;top:175px;font-family:'Liberation Mono',monospace;font-size:12px;letter-spacing:-0.2px;line-height:15px;white-space:pre;color:#c8ccff;">901</div>
<div style="left:967px;top:160px;font-family:'Liberation Mono',monospace;font-size:12px;letter-spacing:-0.2px;line-height:15px;white-space:pre;color:#c8ccff;">928</div>
<div style="left:1030px;top:175px;font-family:'Liberation Mono',monospace;font-size:12px;letter-spacing:-0.2px;line-height:15px;white-space:pre;color:#c8ccff;">948</div>
<div style="left:1093px;top:160px;font-family:'Liberation Mono',monospace;font-size:12px;letter-spacing:-0.2px;line-height:15px;white-space:pre;color:#c8ccff;">965</div>
<div style="left:1156px;top:175px;font-family:'Liberation Mono',monospace;font-size:12px;letter-spacing:-0.2px;line-height:15px;white-space:pre;color:#c8ccff;">979</div>
<div style="left:1219px;top:160px;font-family:'Liberation Mono',monospace;font-size:12px;letter-spacing:-0.2px;line-height:15px;white-space:pre;color:#c8ccff;">999</div>
<div style="left:1282px;top:175px;font-family:'Liberation Mono',monospace;font-size:12px;letter-spacing:-0.2px;line-height:15px;white-space:pre;color:#c8ccff;">1016</div>
<div style="left:280px;top:193px;width:1068px;height:1px;background:#c8ccff"></div>
<div style="left:280px;top:195px;width:1068px;height:1px;background:#c8ccff"></div>
<div style="left:324px;top:142px;width:1px;height:238px;background:#c8ccff"></div>
<div style="left:326px;top:142px;width:1px;height:238px;background:#c8ccff"></div>
<div style="left:336px;top:192px;width:56px;height:1px;background:#f8f8c8"></div>
<div style="left:323px;top:232px;width:1px;height:15px;background:#f8f8c8"></div>
<div style="left:336px;top:193px;width:56px;height:1px;background:#484800"></div>
<div style="left:324px;top:232px;width:1px;height:15px;background:#484800"></div>
<div style="left:336px;top:194px;width:56px;height:1px;background:#f0f040"></div>
<div style="left:325px;top:232px;width:1px;height:15px;background:#f0f040"></div>
<div style="left:336px;top:195px;width:56px;height:1px;background:#484800"></div>
<div style="left:326px;top:232px;width:1px;height:15px;background:#484800"></div>
<div style="left:336px;top:196px;width:56px;height:1px;background:#f8f8c8"></div>
<div style="left:327px;top:232px;width:1px;height:15px;background:#f8f8c8"></div>
<div style="left:336px;top:232px;width:56px;height:15px;background:#ffff50"></div>
<div style="left:287px;top:205px;font-family:'Liberation Mono',monospace;font-size:12px;letter-spacing:-0.2px;line-height:15px;white-space:pre;color:#c8ccff;"> 300      40,00    40,00    40,00    40,00    40,00    40,00    40,00    40,00    40,00    40,00    40,40    44,50    47,20    49,90    52,00    54,00</div>
<div style="left:287px;top:220px;font-family:'Liberation Mono',monospace;font-size:12px;letter-spacing:-0.2px;line-height:15px;white-space:pre;color:#c8ccff;"> 800      40,00    40,00    40,00    40,00    40,00    40,00    40,00    40,00    40,00    40,00    40,40    44,50    47,20    49,90    52,00    54,00</div>
<div style="left:287px;top:235px;font-family:'Liberation Mono',monospace;font-size:12px;letter-spacing:-0.2px;line-height:15px;white-space:pre;color:#c8ccff">1000<span style="color:#303030">       8,00</span>    10,00    14,76    17,52    20,50    25,00    27,00    30,00    32,20    36,40    40,40    44,50    47,20    49,90    52,00    54,00</div>
<div style="left:287px;top:250px;font-family:'Liberation Mono',monospace;font-size:12px;letter-spacing:-0.2px;line-height:15px;white-space:pre;color:#c8ccff;">1250       8,00    10,00    14,00    16,50    21,81    24,85    28,64    32,33    35,00    40,50    42,78    44,50    47,20    49,90    52,00    54,00</div>
<div style="left:287px;top:265px;font-family:'Liberation Mono',monospace;font-size:12px;letter-spacing:-0.2px;line-height:15px;white-space:pre;color:#c8ccff;">1500       8,00    10,10    14,76    16,32    20,18    24,85    28,43    32,88    35,00    40,50    42,55    44,50    47,20    49,90    52,00    54,00</div>
<div style="left:287px;top:280px;font-family:'Liberation Mono',monospace;font-size:12px;letter-spacing:-0.2px;line-height:15px;white-space:pre;color:#c8ccff;">2000       8,00    10,12    12,40    14,79    18,23    22,13    25,50    30,27    33,64    36,20    39,80    42,50    45,10    47,60    49,80    52,00</div>
<div style="left:287px;top:295px;font-family:'Liberation Mono',monospace;font-size:12px;letter-spacing:-0.2px;line-height:15px;white-space:pre;color:#c8ccff;">2500       8,00    10,12    12,50    14,30    17,14    19,75    23,11    27,56    30,82    33,45    36,18    39,50    42,90    45,30    47,70    50,00</div>
<div style="left:287px;top:310px;font-family:'Liberation Mono',monospace;font-size:12px;letter-spacing:-0.2px;line-height:15px;white-space:pre;color:#c8ccff;">3000       8,10    10,42    12,85    15,00    16,40    18,09    20,83    25,39    29,19    32,00    34,70    37,20    40,50    44,00    46,50    49,00</div>
<div style="left:287px;top:325px;font-family:'Liberation Mono',monospace;font-size:12px;letter-spacing:-0.2px;line-height:15px;white-space:pre;color:#c8ccff;">3500       8,20    10,50    13,20    15,80    17,20    18,60    20,40    23,55    27,78    31,18    34,47    36,75    40,00    44,50    46,00    48,00</div>
<div style="left:287px;top:340px;font-family:'Liberation Mono',monospace;font-size:12px;letter-spacing:-0.2px;line-height:15px;white-space:pre;color:#c8ccff;">3750       8,30    11,00    13,80    16,50    18,00    19,50    21,00    23,50    27,00    30,50    34,00    36,50    39,94    45,00    47,00    49,00</div>
<div style="left:287px;top:355px;font-family:'Liberation Mono',monospace;font-size:12px;letter-spacing:-0.2px;line-height:15px;white-space:pre;color:#c8ccff;">4000       8,30    11,00    13,80    16,50    18,00    19,50    21,00    23,50    27,00    30,50    34,00    36,41    39,50    45,00    47,00    49,00</div>
<div style="left:287px;top:370px;font-family:'Liberation Mono',monospace;font-size:12px;letter-spacing:-0.2px;line-height:15px;white-space:pre;color:#c8ccff;">4500       8,30    11,00    13,80    16,50    18,00    19,50    21,00    23,50    27,00    30,50    34,00    36,41    39,50    45,00    47,00    49,00</div>
<svg style="left:699px;top:453px" width="30" height="36" viewBox="0 0 30 36"><g fill="none" stroke="#c8ccff" stroke-width="1"><path d="M12 2.5 H17 L19.5 5 V32 L17 34.5 H12 L9.5 32 V5 Z"/><path d="M11.5 7.5 Q14.5 5 17.5 7.5 M11.5 12.5 H17.5 M11.5 17.5 H17.5 M11.5 23.5 H17.5 M11.5 28 Q14.5 31 17.5 28"/><path d="M6.5 14.5 L1.5 18 L6.5 21.5 Z M22.5 14.5 L27.5 18 L22.5 21.5 Z"/></g></svg>
<div style="left:433px;top:648px;width:2px;height:4px;background:#c8ccff"></div>
<div style="left:433px;top:655px;width:2px;height:4px;background:#c8ccff"></div>
<div style="left:433px;top:663px;width:2px;height:39px;background:#c8ccff"></div>
<svg style="left:418px;top:673px" width="32" height="18" viewBox="0 0 32 18" shape-rendering="auto"><g fill="none" stroke="#c8ccff"><path d="M12.8 2.5 L2.5 9.2 L12.8 16" stroke-width="2.1" stroke-dasharray="1.6 0.5"/><path d="M10.5 4.8 Q8.5 9.2 10.5 13.6" stroke-width="1"/><path d="M19.2 2.5 L29.5 9.2 L19.2 16" stroke-width="2.1" stroke-dasharray="1.6 0.5"/><path d="M21.5 4.8 Q23.5 9.2 21.5 13.6" stroke-width="1"/></g></svg>
<div style="left:280px;top:702px;width:1068px;height:16px;background:#d4d4d4"></div>
<div style="left:280px;top:702px;width:98px;height:16px;background:#a8a8a8"></div>
<svg style="left:280px;top:702px" width="100" height="17" viewBox="0 0 100 17" shape-rendering="auto"><path d="M66 0 L96.5 0 L91 15.5 L71 15.5 Z" fill="#c8c8c8" stroke="#000" stroke-width="1"/><path d="M40 0 L70 0 L64.5 15.5 L45 15.5 Z" fill="#c8c8c8" stroke="#000" stroke-width="1"/><path d="M0 0 L45 0 L39.5 15.5 L5.5 15.5 Z" fill="#fff" stroke="#000" stroke-width="1"/></svg>
<div style="left:286px;top:704px;font-family:'Liberation Mono',monospace;font-size:13px;font-weight:bold;line-height:14px;color:#000;white-space:pre;letter-spacing:-0.3px"><u style="text-decoration-thickness:1px;text-underline-offset:1px">T</u>ext</div>
<div style="left:327px;top:704px;font-family:'Liberation Mono',monospace;font-size:13px;font-weight:bold;line-height:14px;color:#000;white-space:pre;letter-spacing:-0.3px">2d</div>
<div style="left:353px;top:704px;font-family:'Liberation Mono',monospace;font-size:13px;font-weight:bold;line-height:14px;color:#000;white-space:pre;letter-spacing:-0.3px">3d</div>
<div style="left:378px;top:702px;width:970px;height:16px;background:#f0f0f0"></div>
<div style="left:379px;top:703px;width:16px;height:14px;background:linear-gradient(#f4f4f4,#e0e0e0);border:1px solid #c8c8c8;box-sizing:border-box"></div>
<svg style="left:382px;top:705px" width="10" height="10" viewBox="0 0 10 10" shape-rendering="auto"><path d="M6.5 1.5 L3 5 L6.5 8.5" stroke="#3a6a9a" stroke-width="2" fill="none"/></svg>
<div style="left:396px;top:703px;width:840px;height:14px;background:linear-gradient(#f8f8f8,#e4e4e4 50%,#dcdcdc 51%,#e8e8e8);border:1px solid #c8c8c8;box-sizing:border-box"></div>
<div style="left:812px;top:707px;width:1px;height:5px;background:#777;box-shadow:2px 0 #777,4px 0 #777,6px 0 #777"></div>
<div style="left:1331px;top:703px;width:16px;height:14px;background:linear-gradient(#f4f4f4,#e0e0e0);border:1px solid #c8c8c8;box-sizing:border-box"></div>
<svg style="left:1334px;top:705px" width="10" height="10" viewBox="0 0 10 10" shape-rendering="auto"><path d="M3.5 1.5 L7 5 L3.5 8.5" stroke="#3a6a9a" stroke-width="2" fill="none"/></svg>
<div style="left:1348px;top:702px;width:15px;height:16px;background:#c8c8c8"></div>
<div style="left:1348px;top:142px;width:18px;height:560px;background:#f0f0f0"></div>
<div style="left:1349px;top:143px;width:14px;height:15px;background:linear-gradient(90deg,#f4f4f4,#e0e0e0);border:1px solid #c8c8c8;box-sizing:border-box"></div>
<svg style="left:1351px;top:146px" width="10" height="10" viewBox="0 0 10 10" shape-rendering="auto"><path d="M1.5 6.5 L5 3 L8.5 6.5" stroke="#3a6a9a" stroke-width="2" fill="none"/></svg>
<div style="left:1349px;top:159px;width:14px;height:525px;background:linear-gradient(90deg,#f8f8f8,#e8e8e8 50%,#dcdcdc 51%,#e4e4e4);border:1px solid #c8c8c8;box-sizing:border-box"></div>
<div style="left:1354px;top:417px;width:5px;height:1px;background:#777;box-shadow:0 2px #777,0 4px #777,0 6px #777"></div>
<div style="left:1349px;top:686px;width:14px;height:15px;background:linear-gradient(90deg,#f4f4f4,#e0e0e0);border:1px solid #c8c8c8;box-sizing:border-box"></div>
<svg style="left:1351px;top:689px" width="10" height="10" viewBox="0 0 10 10" shape-rendering="auto"><path d="M1.5 3.5 L5 7 L8.5 3.5" stroke="#3a6a9a" stroke-width="2" fill="none"/></svg>
<div style="left:1363px;top:141px;width:1px;height:577px;background:#a0a0a0"></div>
<div style="left:0px;top:718px;width:1366px;height:20px;background:#d4d4d4"></div>
<div style="left:0px;top:718px;width:1366px;height:1px;background:#a8a8a8"></div>
<div style="left:0px;top:719px;width:1366px;height:1px;background:#f0f0f0"></div>
<div style="left:1.5px;top:724px;font-size:10.8px;line-height:12px;color:#000">Press F1 to receive help.</div>
<svg style="left:807px;top:723px" width="52" height="13" viewBox="0 0 52 13" shape-rendering="auto"><path d="M1.5 1.5 H11 V4 H5.5 L8.5 6.5 L5.5 9 H11 V11.5 H1.5 V9.5 L4.5 6.5 L1.5 3.5 Z" fill="#e8e8e8" stroke="#808080" stroke-width="1.1"/><g transform="translate(26,6.5)"><circle r="4" fill="none" stroke="#909090" stroke-width="1.3"/><circle r="5.2" fill="none" stroke="#909090" stroke-width="1.6" stroke-dasharray="1.4 1.3"/></g><path d="M44 2 L39.5 6.5 L44 11 M44 2 L48.5 6.5 L44 11" fill="none" stroke="#a0a0a0" stroke-width="1.1"/><path d="M42 6.5 H46" stroke="#a0a0a0"/></svg>
<div style="left:864px;top:724px;font-size:10px;line-height:12px;color:#000">No CS</div>
<svg style="left:960px;top:724px" width="17" height="11" viewBox="0 0 17 11" shape-rendering="auto"><path d="M1.5 7.5 Q3 4.5 6 4 L9 2.5 H13 L15.5 1.5 Q17 3 16 5 L14 7 Q13 9 11 9 L8.5 10.2 H6 Q4 10.2 3.5 9.2 Q1 9.2 1.5 7.5 Z M4 7.5 Q6 6 8 6.5 M5 9 Q7 8 8.5 8.5" fill="none" stroke="#000" stroke-width="1.2"/></svg>
<div style="left:983px;top:724px;font-size:10.1px;line-height:12px;color:#000">No OLS-Module</div>
<div style="left:1072px;top:724px;font-size:11.3px;line-height:12px;color:#000">Cursor: 78170 =&gt; 00008 (00008) -&gt; 0 (0.00%), Width: 16</div>
<div style="left:0px;top:738px;width:1366px;height:30px;background:linear-gradient(#000 0,#000 1px,#5a5a5a 1px,#5a5a5a 2px,#383838 2px,#2a2a2a 15px,#0e0e0e 15px,#141414 29px,#000 29px)"></div>
<div style="left:15px;top:738px;width:45px;height:28px;border:1px solid #000;border-radius:2px;box-sizing:border-box;background:linear-gradient(#484848,#2c2c2c 48%,#0a0a0a 50%,#1c1c1c);box-shadow:inset 0 0 0 1px #5c5c5c"></div>
<svg style="left:27px;top:742px" width="21" height="20" viewBox="0 0 21 20" shape-rendering="auto"><defs><radialGradient id="wr" cx="0.4" cy="0.4" r="0.7"><stop offset="0" stop-color="#ffa040"/><stop offset="1" stop-color="#e03010"/></radialGradient><radialGradient id="wg" cx="0.4" cy="0.4" r="0.7"><stop offset="0" stop-color="#b0e060"/><stop offset="1" stop-color="#40a020"/></radialGradient><radialGradient id="wb" cx="0.6" cy="0.4" r="0.7"><stop offset="0" stop-color="#a0e0ff"/><stop offset="1" stop-color="#1070d0"/></radialGradient><radialGradient id="wy" cx="0.5" cy="0.5" r="0.7"><stop offset="0" stop-color="#ffe060"/><stop offset="1" stop-color="#f0a010"/></radialGradient></defs><path d="M3 3 Q6 0.5 10 2.5 L8.8 8.8 Q5.5 7 1.8 9 Z" fill="url(#wr)"/><path d="M11 3 Q15 5 20 2.5 L18.5 9.8 Q14 11.5 9.8 9.5 Z" fill="url(#wg)"/><path d="M1.5 10 Q5 8.5 8.5 10.5 L7.3 16.8 Q4 15 0.3 16.5 Z" fill="url(#wb)"/><path d="M9.7 11 Q14 12.8 18.3 11 L17 18 Q13 19.5 8.5 17.5 Z" fill="url(#wy)"/></svg>
<div style="left:80px;top:747px;width:16px;height:13px;background:linear-gradient(#6aa8e8,#2060b0);border:1px solid #c8d8f0;box-sizing:border-box"></div>
<svg style="left:103px;top:745px" width="16" height="16" viewBox="0 0 16 16" shape-rendering="auto"><circle cx="8" cy="8" r="7.5" fill="#e04030"/><path d="M8 8 L1.5 4.2 A7.5 7.5 0 0 0 8 15.5 Z" fill="#30a040"/><path d="M8 8 L8 15.5 A7.5 7.5 0 0 0 14.5 4.2 Z" fill="#f0c020"/><circle cx="8" cy="8" r="3.6" fill="#fff"/><circle cx="8" cy="8" r="2.7" fill="#3070d0"/></svg>
<div style="left:164px;top:741px;width:154px;height:24px;border:1px solid #3c3c3c;border-radius:3px;box-sizing:border-box;background:linear-gradient(#2c2c2c,#1e1e1e 50%,#101010 51%,#161616)"></div>
<div style="left:324px;top:741px;width:154px;height:24px;border:1px solid #3c3c3c;border-radius:3px;box-sizing:border-box;background:linear-gradient(#2c2c2c,#1e1e1e 50%,#101010 51%,#161616)"></div>
<svg style="left:172px;top:745px" width="17" height="17" viewBox="0 0 17 17" shape-rendering="auto"><circle cx="8.5" cy="8.5" r="8" fill="#d01010"/><circle cx="8.5" cy="8.5" r="5.8" fill="#fff"/><path d="M8.5 8.5 C7.6 5.8 3.9 5.8 3.9 8.5 C3.9 11.2 7.6 11.2 8.5 8.5 C9.4 5.8 13.1 5.8 13.1 8.5 C13.1 11.2 9.4 11.2 8.5 8.5 Z" fill="none" stroke="#000" stroke-width="1.5"/></svg>
<div style="left:191px;top:746px;font-size:10.8px;line-height:14px;color:#e0e0e0">WinOLS - Peugeot Pa...</div>
<svg style="left:331px;top:745px" width="16" height="16" viewBox="0 0 16 16" shape-rendering="auto"><circle cx="8" cy="8" r="7.5" fill="#e04030"/><path d="M8 8 L1.5 4.2 A7.5 7.5 0 0 0 8 15.5 Z" fill="#30a040"/><path d="M8 8 L8 15.5 A7.5 7.5 0 0 0 14.5 4.2 Z" fill="#f0c020"/><circle cx="8" cy="8" r="3.6" fill="#fff"/><circle cx="8" cy="8" r="2.7" fill="#3070d0"/></svg>
<div style="left:350px;top:746px;font-size:11.3px;line-height:14px;color:#e0e0e0">www.chiptuners.fr - ...</div>
<div style="left:1244px;top:741px;width:14px;height:24px;border:1px solid #404040;border-radius:3px;box-sizing:border-box"></div>
<svg style="left:1247px;top:749px" width="8" height="9" viewBox="0 0 8 9" shape-rendering="auto"><path d="M5.5 1 L2 4.5 L5.5 8" stroke="#fff" stroke-width="1.8" fill="none"/></svg>
<svg style="left:1272px;top:744px" width="18" height="15" viewBox="0 0 18 15" shape-rendering="auto"><rect x="1" y="2" width="9" height="8" fill="#2070c0" stroke="#fff" stroke-width="1.2"/><path d="M5 11 V13 M2 13.5 H8" stroke="#fff" stroke-width="1.2"/><path d="M12 3 Q13.5 5.5 12 8 M14 1.5 Q16.5 5.5 14 9.5" stroke="#ddd" stroke-width="1" fill="none"/></svg>
<svg style="left:1293px;top:745px" width="11" height="13" viewBox="0 0 11 13" shape-rendering="auto"><path d="M5.5 1 C2.5 1 2 4 2 7 L1 9.5 H10 L9 7 C9 4 8.5 1 5.5 1 Z M4 10.5 H7 L5.5 12.5 Z" fill="#5a5a5a"/></svg>
<svg style="left:1309px;top:745px" width="16" height="15" viewBox="0 0 16 15" shape-rendering="auto"><rect x="4" y="1" width="9" height="7" fill="#444" stroke="#fff" stroke-width="1.1"/><rect x="1" y="5" width="8" height="7" fill="#444" stroke="#fff" stroke-width="1.1"/><path d="M2 13.5 H8" stroke="#fff"/><path d="M8 8 L14 14 M14 8 L8 14" stroke="#e02020" stroke-width="2"/></svg>
<div style="left:1331px;top:745px;font-size:11px;line-height:14px;color:#e8e8e8">22:04</div>
<div style="left:78px;top:48px;width:1px;height:18px;background:#a0a0a0"></div>
<div style="left:79px;top:48px;width:1px;height:18px;background:#f4f4f4"></div>
<div style="left:130px;top:48px;width:1px;height:18px;background:#a0a0a0"></div>
<div style="left:131px;top:48px;width:1px;height:18px;background:#f4f4f4"></div>
<div style="left:251px;top:48px;width:1px;height:18px;background:#a0a0a0"></div>
<div style="left:252px;top:48px;width:1px;height:18px;background:#f4f4f4"></div>
<div style="left:326px;top:48px;width:1px;height:18px;background:#a0a0a0"></div>
<div style="left:327px;top:48px;width:1px;height:18px;background:#f4f4f4"></div>
<div style="left:355px;top:48px;width:1px;height:18px;background:#a0a0a0"></div>
<div style="left:356px;top:48px;width:1px;height:18px;background:#f4f4f4"></div>
<div style="left:453px;top:48px;width:1px;height:18px;background:#a0a0a0"></div>
<div style="left:454px;top:48px;width:1px;height:18px;background:#f4f4f4"></div>
<div style="left:633px;top:48px;width:1px;height:18px;background:#a0a0a0"></div>
<div style="left:634px;top:48px;width:1px;height:18px;background:#f4f4f4"></div>
<div style="left:32px;top:72px;width:1px;height:18px;background:#a0a0a0"></div>
<div style="left:33px;top:72px;width:1px;height:18px;background:#f4f4f4"></div>
<div style="left:61px;top:72px;width:1px;height:18px;background:#a0a0a0"></div>
<div style="left:62px;top:72px;width:1px;height:18px;background:#f4f4f4"></div>
<div style="left:182px;top:72px;width:1px;height:18px;background:#a0a0a0"></div>
<div style="left:183px;top:72px;width:1px;height:18px;background:#f4f4f4"></div>
<div style="left:169px;top:96px;width:1px;height:18px;background:#a0a0a0"></div>
<div style="left:170px;top:96px;width:1px;height:18px;background:#f4f4f4"></div>
<div style="left:230px;top:96px;width:1px;height:18px;background:#a0a0a0"></div>
<div style="left:231px;top:96px;width:1px;height:18px;background:#f4f4f4"></div>
<div style="left:259px;top:96px;width:1px;height:18px;background:#a0a0a0"></div>
<div style="left:260px;top:96px;width:1px;height:18px;background:#f4f4f4"></div>
<div style="left:357px;top:96px;width:1px;height:18px;background:#a0a0a0"></div>
<div style="left:358px;top:96px;width:1px;height:18px;background:#f4f4f4"></div>
<div style="left:432px;top:96px;width:1px;height:18px;background:#a0a0a0"></div>
<div style="left:433px;top:96px;width:1px;height:18px;background:#f4f4f4"></div>
<div style="left:484px;top:96px;width:1px;height:18px;background:#a0a0a0"></div>
<div style="left:485px;top:96px;width:1px;height:18px;background:#f4f4f4"></div>
<div style="left:78px;top:120px;width:1px;height:18px;background:#a0a0a0"></div>
<div style="left:79px;top:120px;width:1px;height:18px;background:#f4f4f4"></div>
<div style="left:107px;top:120px;width:1px;height:18px;background:#a0a0a0"></div>
<div style="left:108px;top:120px;width:1px;height:18px;background:#f4f4f4"></div>
<div style="left:182px;top:120px;width:1px;height:18px;background:#a0a0a0"></div>
<div style="left:183px;top:120px;width:1px;height:18px;background:#f4f4f4"></div>
</body></html>
